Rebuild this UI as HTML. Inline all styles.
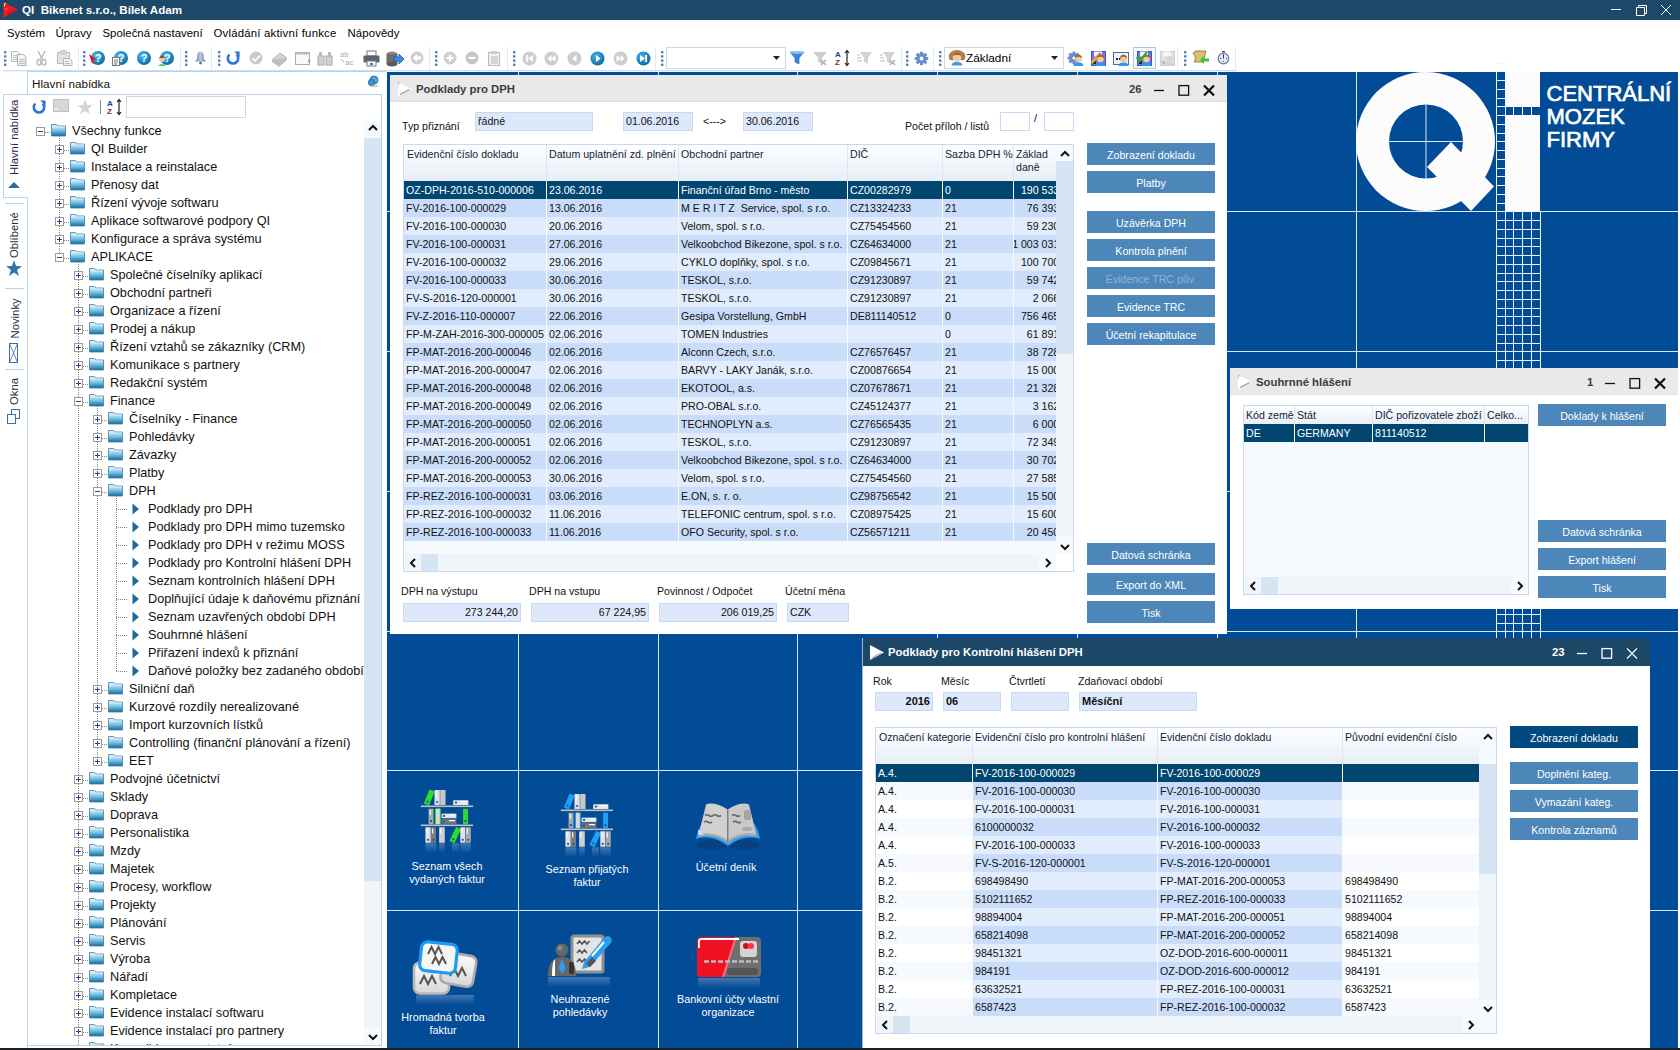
<!DOCTYPE html><html><head><meta charset="utf-8"><style>
html,body{margin:0;padding:0;}
body{width:1680px;height:1050px;overflow:hidden;position:relative;background:#fff;font-family:"Liberation Sans", sans-serif;font-size:11px;color:#111;}
div{box-sizing:border-box;}
svg{position:absolute;overflow:visible;}
</style></head><body>

<div style="position:absolute;left:0px;top:0px;width:1680px;height:20px;background:#1e4868"></div>
<svg style="left:0;top:0" width="20" height="20"><path d="M3.5 2 L18 9.7 L3.5 17.8 Z" fill="#ee1b22"/><path d="M7.5 14 L15 10" stroke="#a81515" stroke-width="1.3"/><path d="M4.5 3.5 v3 M4.5 3.5 h1.5 M4.8 9 h0.8 M6.5 9 h0.8" stroke="#fff" stroke-width="0.8"/></svg>
<div style="position:absolute;left:22px;top:0px;height:20px;line-height:20px;white-space:nowrap;color:#fff;font-weight:bold;font-size:11.6px;white-space:pre;">QI  Bikenet s.r.o., Bílek Adam</div>
<svg style="left:1600px;top:0" width="80" height="20" fill="none" stroke="#fff" stroke-width="1"><path d="M11 9.5 H21"/><path d="M36.5 7.5 h8 v8 h-8 z"/><path d="M38.5 7.5 v-2 h8 v8 h-2"/><path d="M61 5 L71 15 M71 5 L61 15"/></svg>
<div style="position:absolute;left:7px;top:24px;height:18px;line-height:18px;white-space:nowrap;font-size:11.4px;color:#000;letter-spacing:0px;">Systém</div>
<div style="position:absolute;left:55.5px;top:24px;height:18px;line-height:18px;white-space:nowrap;font-size:11.4px;color:#000;letter-spacing:0px;">Úpravy</div>
<div style="position:absolute;left:102.5px;top:24px;height:18px;line-height:18px;white-space:nowrap;font-size:11.4px;color:#000;letter-spacing:0px;">Společná nastavení</div>
<div style="position:absolute;left:213.5px;top:24px;height:18px;line-height:18px;white-space:nowrap;font-size:11.4px;color:#000;letter-spacing:0.2px;">Ovládání aktivní funkce</div>
<div style="position:absolute;left:347.5px;top:24px;height:18px;line-height:18px;white-space:nowrap;font-size:11.4px;color:#000;letter-spacing:0.1px;">Nápovědy</div>
<div style="position:absolute;left:78px;top:47px;width:1px;height:23px;background:#e3ebf5;"></div>
<div style="position:absolute;left:180px;top:47px;width:1px;height:23px;background:#e3ebf5;"></div>
<div style="position:absolute;left:211px;top:47px;width:1px;height:23px;background:#e3ebf5;"></div>
<div style="position:absolute;left:429px;top:47px;width:1px;height:23px;background:#e3ebf5;"></div>
<div style="position:absolute;left:507px;top:47px;width:1px;height:23px;background:#e3ebf5;"></div>
<div style="position:absolute;left:655px;top:47px;width:1px;height:23px;background:#e3ebf5;"></div>
<div style="position:absolute;left:901px;top:47px;width:1px;height:23px;background:#e3ebf5;"></div>
<div style="position:absolute;left:933px;top:47px;width:1px;height:23px;background:#e3ebf5;"></div>
<div style="position:absolute;left:1177px;top:47px;width:1px;height:23px;background:#e3ebf5;"></div>
<div style="position:absolute;left:1235px;top:47px;width:1px;height:23px;background:#e3ebf5;"></div>
<div style="position:absolute;left:3px;top:70px;width:1233px;height:1px;background:#cddcf0;"></div>
<div style="position:absolute;left:3px;top:71px;width:1233px;height:1px;background:#edf3fa;"></div>
<svg style="left:4px;top:51px;" width="4" height="18"><rect x="0" y="0.0" width="2.4" height="2.4" fill="#5b7cb8"/><rect x="0" y="4.2" width="2.4" height="2.4" fill="#5b7cb8"/><rect x="0" y="8.4" width="2.4" height="2.4" fill="#5b7cb8"/><rect x="0" y="12.6" width="2.4" height="2.4" fill="#5b7cb8"/></svg>
<svg style="left:83px;top:51px;" width="4" height="18"><rect x="0" y="0.0" width="2.4" height="2.4" fill="#5b7cb8"/><rect x="0" y="4.2" width="2.4" height="2.4" fill="#5b7cb8"/><rect x="0" y="8.4" width="2.4" height="2.4" fill="#5b7cb8"/><rect x="0" y="12.6" width="2.4" height="2.4" fill="#5b7cb8"/></svg>
<svg style="left:185px;top:51px;" width="4" height="18"><rect x="0" y="0.0" width="2.4" height="2.4" fill="#5b7cb8"/><rect x="0" y="4.2" width="2.4" height="2.4" fill="#5b7cb8"/><rect x="0" y="8.4" width="2.4" height="2.4" fill="#5b7cb8"/><rect x="0" y="12.6" width="2.4" height="2.4" fill="#5b7cb8"/></svg>
<svg style="left:218px;top:51px;" width="4" height="18"><rect x="0" y="0.0" width="2.4" height="2.4" fill="#5b7cb8"/><rect x="0" y="4.2" width="2.4" height="2.4" fill="#5b7cb8"/><rect x="0" y="8.4" width="2.4" height="2.4" fill="#5b7cb8"/><rect x="0" y="12.6" width="2.4" height="2.4" fill="#5b7cb8"/></svg>
<svg style="left:435px;top:51px;" width="4" height="18"><rect x="0" y="0.0" width="2.4" height="2.4" fill="#5b7cb8"/><rect x="0" y="4.2" width="2.4" height="2.4" fill="#5b7cb8"/><rect x="0" y="8.4" width="2.4" height="2.4" fill="#5b7cb8"/><rect x="0" y="12.6" width="2.4" height="2.4" fill="#5b7cb8"/></svg>
<svg style="left:513px;top:51px;" width="4" height="18"><rect x="0" y="0.0" width="2.4" height="2.4" fill="#5b7cb8"/><rect x="0" y="4.2" width="2.4" height="2.4" fill="#5b7cb8"/><rect x="0" y="8.4" width="2.4" height="2.4" fill="#5b7cb8"/><rect x="0" y="12.6" width="2.4" height="2.4" fill="#5b7cb8"/></svg>
<svg style="left:661px;top:51px;" width="4" height="18"><rect x="0" y="0.0" width="2.4" height="2.4" fill="#5b7cb8"/><rect x="0" y="4.2" width="2.4" height="2.4" fill="#5b7cb8"/><rect x="0" y="8.4" width="2.4" height="2.4" fill="#5b7cb8"/><rect x="0" y="12.6" width="2.4" height="2.4" fill="#5b7cb8"/></svg>
<svg style="left:906px;top:51px;" width="4" height="18"><rect x="0" y="0.0" width="2.4" height="2.4" fill="#5b7cb8"/><rect x="0" y="4.2" width="2.4" height="2.4" fill="#5b7cb8"/><rect x="0" y="8.4" width="2.4" height="2.4" fill="#5b7cb8"/><rect x="0" y="12.6" width="2.4" height="2.4" fill="#5b7cb8"/></svg>
<svg style="left:939px;top:51px;" width="4" height="18"><rect x="0" y="0.0" width="2.4" height="2.4" fill="#5b7cb8"/><rect x="0" y="4.2" width="2.4" height="2.4" fill="#5b7cb8"/><rect x="0" y="8.4" width="2.4" height="2.4" fill="#5b7cb8"/><rect x="0" y="12.6" width="2.4" height="2.4" fill="#5b7cb8"/></svg>
<svg style="left:1184px;top:51px;" width="4" height="18"><rect x="0" y="0.0" width="2.4" height="2.4" fill="#5b7cb8"/><rect x="0" y="4.2" width="2.4" height="2.4" fill="#5b7cb8"/><rect x="0" y="8.4" width="2.4" height="2.4" fill="#5b7cb8"/><rect x="0" y="12.6" width="2.4" height="2.4" fill="#5b7cb8"/></svg>
<svg style="left:10px;top:50px;" width="18" height="16"><path d="M1.5 1.5 h6 l2.5 2.5 v7.5 h-8.5z" fill="#f6f6f6" stroke="#b9b9b9"/><path d="M3 5.5h5M3 7.5h5M3 9.5h4" stroke="#c2c2c2"/><path d="M7.5 4.5 h6 l2.5 2.5 v8.5 h-8.5z" fill="#f6f6f6" stroke="#b0b0b0"/><path d="M9 9.5h6M9 11.5h6M9 13.5h6" stroke="#bdbdbd"/></svg>
<svg style="left:36px;top:50px;" width="11" height="16"><path d="M2 1 L6.5 9.5 M9 1 L4.5 9.5" stroke="#b5b5b5" stroke-width="1.3"/><ellipse cx="3" cy="12.3" rx="2" ry="2.8" fill="none" stroke="#b9b9b9" stroke-width="1.4"/><ellipse cx="8" cy="12.3" rx="2" ry="2.8" fill="none" stroke="#b9b9b9" stroke-width="1.4"/></svg>
<svg style="left:56px;top:50px;" width="18" height="16"><rect x="1.5" y="2.5" width="12" height="11" fill="#e4e4e4" stroke="#bdbdbd"/><rect x="4.5" y="0.5" width="6" height="3.5" rx="1" fill="#d8d8d8" stroke="#bbb" stroke-width="0.8"/><path d="M7.5 8.5 h6 l2.5 2.5 v4.5 h-8.5z" fill="#f0f0f0" stroke="#b5b5b5"/><path d="M9 11.5h4M9 13.5h5" stroke="#bdbdbd"/></svg>
<svg style="left:89px;top:50px;" width="18" height="17"><defs><radialGradient id="hg" cx="40%" cy="35%" r="65%"><stop offset="0" stop-color="#4fc2f0"/><stop offset="1" stop-color="#0a6aa8"/></radialGradient></defs><circle cx="9" cy="8" r="7" fill="url(#hg)"/><text x="9" y="12.2" font-size="11" font-weight="bold" fill="#fff" text-anchor="middle" font-family="Liberation Sans">?</text><path d="M0 4 L7 9 L4 10 L6 14 L3 13 Z" fill="#e01919"/></svg>
<svg style="left:112px;top:50px;" width="18" height="17"><defs><radialGradient id="hg" cx="40%" cy="35%" r="65%"><stop offset="0" stop-color="#4fc2f0"/><stop offset="1" stop-color="#0a6aa8"/></radialGradient></defs><circle cx="9" cy="8" r="7" fill="url(#hg)"/><text x="9" y="12.2" font-size="11" font-weight="bold" fill="#fff" text-anchor="middle" font-family="Liberation Sans">?</text><rect x="0.5" y="7.5" width="7" height="8" fill="#fff" stroke="#777"/><path d="M2 10h4M2 12h4M2 14h3" stroke="#777"/></svg>
<svg style="left:135px;top:50px;" width="18" height="17"><defs><radialGradient id="hg" cx="40%" cy="35%" r="65%"><stop offset="0" stop-color="#4fc2f0"/><stop offset="1" stop-color="#0a6aa8"/></radialGradient></defs><circle cx="9" cy="8" r="7" fill="url(#hg)"/><text x="9" y="12.2" font-size="11" font-weight="bold" fill="#fff" text-anchor="middle" font-family="Liberation Sans">?</text></svg>
<svg style="left:158px;top:50px;" width="18" height="17"><defs><radialGradient id="hg" cx="40%" cy="35%" r="65%"><stop offset="0" stop-color="#4fc2f0"/><stop offset="1" stop-color="#0a6aa8"/></radialGradient></defs><circle cx="9" cy="8" r="7" fill="url(#hg)"/><text x="9" y="12.2" font-size="11" font-weight="bold" fill="#fff" text-anchor="middle" font-family="Liberation Sans">?</text><circle cx="4" cy="9" r="3" fill="#f2c8a0"/><path d="M1 8 q3 -5 6 0" fill="#7a4a20"/><path d="M0 16 q4 -4 8 0z" fill="#47c94a"/></svg>
<svg style="left:194px;top:51px;" width="13" height="14"><defs><linearGradient id="bellg" x1="0" x2="1"><stop offset="0" stop-color="#5f7fb0"/><stop offset="0.5" stop-color="#b8c8e0"/><stop offset="1" stop-color="#6080b0"/></linearGradient></defs><path d="M6.5 0.5 C3.5 0.5 3 4 3 8 L1 10.5 H12 L10 8 C10 4 9.5 0.5 6.5 0.5Z" fill="url(#bellg)"/><circle cx="6.5" cy="12" r="1.4" fill="#4f6f98"/></svg>
<svg style="left:225px;top:50px;" width="16" height="16"><path d="M4.4 4.6 A5.2 5.2 0 1 0 11.6 4.6" fill="none" stroke="#2f74dc" stroke-width="2.6"/><path d="M9.2 1.6 L14.6 1.6 L14.6 7Z" fill="#2f74dc"/></svg>
<svg style="left:249px;top:51px;" width="15" height="15"><circle cx="7" cy="7" r="6.5" fill="#c9c9c9"/><path d="M3.5 7 L6 10 L11 4.5" fill="none" stroke="#fff" stroke-width="1.8"/></svg>
<svg style="left:271px;top:51px;" width="17" height="15"><path d="M1 9 L9 2 L16 7 L8 14 Z" fill="#d2d2d2" stroke="#b5b5b5"/><path d="M1 9 L1 11 L8 16 L16 9 L16 7" fill="#bdbdbd"/></svg>
<svg style="left:295px;top:51px;" width="16" height="15"><rect x="0.5" y="1.5" width="14" height="12" fill="#fafafa" stroke="#aaa"/><rect x="0.5" y="1.5" width="14" height="2" fill="#bbb"/><path d="M13 8 L16 10 L13 12Z" fill="#aaa"/></svg>
<svg style="left:317px;top:51px;" width="16" height="15"><rect x="1" y="5" width="6" height="9" fill="#d0d0d0" stroke="#aaa"/><rect x="9" y="5" width="6" height="9" fill="#d0d0d0" stroke="#aaa"/><rect x="2" y="1" width="3" height="5" fill="#bbb"/><rect x="11" y="1" width="3" height="5" fill="#bbb"/></svg>
<svg style="left:340px;top:50px;" width="16" height="17"><text x="0" y="7" font-size="7.5" fill="#a8a8a8" font-family="Liberation Sans">ab</text><text x="5" y="15" font-size="8" fill="#a8a8a8" font-family="Liberation Sans">ac</text><path d="M1 9 L4 12" stroke="#aaa"/></svg>
<svg style="left:363px;top:50px;" width="17" height="17"><rect x="4" y="1" width="9" height="5" fill="#fff" stroke="#777"/><rect x="0.5" y="5.5" width="16" height="7" rx="1" fill="#5a6470"/><rect x="4" y="11" width="9" height="5" fill="#fff" stroke="#777"/><rect x="7" y="13" width="3" height="2" fill="#2a7ad4"/></svg>
<svg style="left:386px;top:50px;" width="18" height="17"><ellipse cx="6" cy="4" rx="5.5" ry="2.5" fill="#888"/><rect x="0.5" y="4" width="11" height="10" fill="#6d6d6d"/><ellipse cx="6" cy="14" rx="5.5" ry="2.5" fill="#5a5a5a"/><path d="M8 7 h5 v-3 l5 5 l-5 5 v-3 h-5z" fill="#3d8be8" stroke="#1d5bb8" stroke-width="0.8"/></svg>
<svg style="left:410px;top:51px;" width="15" height="15"><circle cx="7" cy="7" r="6.5" fill="#cfcfcf"/><path d="M3 7 L7 3 V5.5 H11 V8.5 H7 V11Z" fill="#fff"/></svg>
<svg style="left:443px;top:51px;" width="15" height="15"><circle cx="7" cy="7" r="6.5" fill="#cfcfcf"/><path d="M3.5 7 H10.5 M7 3.5 V10.5" stroke="#fff" stroke-width="2.2"/></svg>
<svg style="left:465px;top:51px;" width="15" height="15"><circle cx="7" cy="7" r="6.5" fill="#c5c5c5"/><path d="M3.5 7 H10.5" stroke="#fff" stroke-width="2.2"/></svg>
<svg style="left:487px;top:50px;" width="15" height="16"><rect x="1.5" y="2.5" width="11" height="13" fill="#f0f0f0" stroke="#bbb"/><rect x="4" y="1" width="6" height="3" fill="#ccc"/><path d="M4 7h7M4 9h7M4 11h7M4 13h7" stroke="#bbb"/></svg>
<svg style="left:522px;top:51px;" width="16" height="16"><circle cx="7.5" cy="7.5" r="7" fill="#cdcdcd"/><rect x="4" y="4" width="1.8" height="7" fill="#fff"/><path d="M11 4 L6 7.5 L11 11Z" fill="#fff"/></svg>
<svg style="left:544px;top:51px;" width="16" height="16"><circle cx="7.5" cy="7.5" r="7" fill="#cdcdcd"/><path d="M7.5 4 L3.5 7.5 L7.5 11Z M11.5 4 L7.5 7.5 L11.5 11Z" fill="#fff"/></svg>
<svg style="left:567px;top:51px;" width="16" height="16"><circle cx="7.5" cy="7.5" r="7" fill="#cdcdcd"/><path d="M9.5 4 L5 7.5 L9.5 11Z" fill="#fff"/></svg>
<svg style="left:590px;top:51px;" width="16" height="16"><defs><radialGradient id="ng" cx="40%" cy="35%" r="70%"><stop offset="0" stop-color="#3fb7ea"/><stop offset="1" stop-color="#0a65a3"/></radialGradient></defs><circle cx="7.5" cy="7.5" r="7" fill="url(#ng)"/><path d="M6 4 L10.5 7.5 L6 11Z" fill="#fff"/></svg>
<svg style="left:613px;top:51px;" width="16" height="16"><circle cx="7.5" cy="7.5" r="7" fill="#cdcdcd"/><path d="M3.5 4 L7.5 7.5 L3.5 11Z M7.5 4 L11.5 7.5 L7.5 11Z" fill="#fff"/></svg>
<svg style="left:636px;top:51px;" width="16" height="16"><defs><radialGradient id="ng" cx="40%" cy="35%" r="70%"><stop offset="0" stop-color="#3fb7ea"/><stop offset="1" stop-color="#0a65a3"/></radialGradient></defs><circle cx="7.5" cy="7.5" r="7" fill="url(#ng)"/><path d="M4 4 L9 7.5 L4 11Z" fill="#fff"/><rect x="9.2" y="4" width="1.8" height="7" fill="#fff"/></svg>
<div style="position:absolute;left:666px;top:47px;width:120px;height:22px;border:1px solid #c9d9ee;background:#fff;"></div>
<svg style="left:773px;top:56px;" width="8" height="5"><path d="M0 0 H7 L3.5 4Z" fill="#222"/></svg>
<svg style="left:789px;top:50px;" width="16" height="16"><path d="M1 2 H15 L10 8 V14 L6 12 V8Z" fill="#3d86e0" stroke="#1e5cb0" stroke-width="0.6"/><ellipse cx="8" cy="2.5" rx="7" ry="1.5" fill="#8cc0f5"/></svg>
<svg style="left:812px;top:50px;" width="16" height="16"><path d="M1 2 H15 L10 8 V14 L6 12 V8Z" fill="#cfcfcf"/><path d="M9 10 L14 15 M14 10 L9 15" stroke="#aaa" stroke-width="1.2"/></svg>
<svg style="left:835px;top:49px;" width="16" height="18"><text x="0" y="8" font-size="8" font-weight="bold" fill="#1f3f9a" font-family="Liberation Sans">A</text><text x="0" y="16" font-size="8" font-weight="bold" fill="#8a1f1f" font-family="Liberation Sans">Z</text><path d="M12 2 V16 M10 4 L12 1.5 L14 4 M10 14 L12 16.5 L14 14" stroke="#222" stroke-width="1.2" fill="none"/></svg>
<svg style="left:857px;top:50px;" width="16" height="16"><path d="M3 2 H15 L11 8 V14 L7 12 V8Z" fill="#d3d3d3"/><path d="M0 5h3M0 8h4M0 11h5" stroke="#bbb"/></svg>
<svg style="left:880px;top:50px;" width="17" height="16"><path d="M3 2 H15 L11 8 V14 L7 12 V8Z" fill="#d3d3d3"/><path d="M0 5h3M0 8h4M0 11h5" stroke="#bbb"/><path d="M10 10 L15 15 M15 10 L10 15" stroke="#aaa" stroke-width="1.2"/></svg>
<svg style="left:914px;top:51px;" width="15" height="15"><g fill="#6a8ccc"><rect x="5.9" y="0.7" width="3.2" height="13.6" rx="0.8" transform="rotate(0 7.5 7.5)"/><rect x="5.9" y="0.7" width="3.2" height="13.6" rx="0.8" transform="rotate(45 7.5 7.5)"/><rect x="5.9" y="0.7" width="3.2" height="13.6" rx="0.8" transform="rotate(90 7.5 7.5)"/><rect x="5.9" y="0.7" width="3.2" height="13.6" rx="0.8" transform="rotate(135 7.5 7.5)"/><circle cx="7.5" cy="7.5" r="5"/></g><circle cx="7.5" cy="7.5" r="1.9" fill="#fff"/></svg>
<div style="position:absolute;left:944px;top:47px;width:120px;height:22px;border:1px solid #c9d9ee;background:#fff;"></div>
<svg style="left:948px;top:50px;" width="18" height="16"><path d="M1 9 Q0 4 3 2 Q5.5 0 9 0 Q12.5 0 15 2 Q18 4 17 9 Q15 11 13 10 L5 10 Q3 11 1 9Z" fill="#b07c4a"/><circle cx="9" cy="7.5" r="4.3" fill="#f3c9a0"/><path d="M4.8 6 Q6 2.5 9 3 Q12 2.5 13.2 6 Q11 4.5 9 5 Q7 4.5 4.8 6Z" fill="#9a6636"/><path d="M3.5 15.5 Q4 11.5 9 12 Q14 11.5 14.5 15.5Z" fill="#3b9ee8"/></svg>
<div style="position:absolute;left:966px;top:47px;height:22px;line-height:22px;white-space:nowrap;font-size:11.8px;color:#000;">Základní</div>
<svg style="left:1051px;top:56px;" width="8" height="5"><path d="M0 0 H7 L3.5 4Z" fill="#222"/></svg>
<svg style="left:1068px;top:50px;" width="17" height="17"><g fill="#6a8ccc"><rect x="4.4" y="1.6" width="3.2" height="12.8" rx="0.8" transform="rotate(0 6 8)"/><rect x="4.4" y="1.6" width="3.2" height="12.8" rx="0.8" transform="rotate(45 6 8)"/><rect x="4.4" y="1.6" width="3.2" height="12.8" rx="0.8" transform="rotate(90 6 8)"/><rect x="4.4" y="1.6" width="3.2" height="12.8" rx="0.8" transform="rotate(135 6 8)"/><circle cx="6" cy="8" r="4.6"/></g><circle cx="6" cy="8" r="1.6" fill="#fff"/><path d="M5.5 16 Q6 12 10.5 12.5 Q15 12 15.5 16Z" fill="#2f9be8"/><circle cx="10.5" cy="9" r="3.3" fill="#f3c9a0"/><path d="M7 8.5 Q7 4.8 10.5 4.8 Q14 4.8 14 8.5 Q12.5 6.5 10.5 6.8 Q8.5 6.5 7 8.5Z" fill="#a0622a"/></svg>
<svg style="left:1090px;top:50px;" width="17" height="17"><rect x="1.5" y="1.5" width="14" height="14" fill="#7176dc" stroke="#4b50b5"/><rect x="4" y="1.5" width="8" height="5" fill="#f4f4ff"/><rect x="3" y="11" width="3" height="3" fill="#222"/><path d="M1.5 13 L10 4" stroke="#d8a838" stroke-width="3"/><path d="M9 3 L11 5" stroke="#e07060" stroke-width="2"/><path d="M5.5 16 Q6 12 10.5 12.5 Q15 12 15.5 16Z" fill="#2f9be8"/><circle cx="10.5" cy="9" r="3.3" fill="#f3c9a0"/><path d="M7 8.5 Q7 4.8 10.5 4.8 Q14 4.8 14 8.5 Q12.5 6.5 10.5 6.8 Q8.5 6.5 7 8.5Z" fill="#a0622a"/></svg>
<svg style="left:1113px;top:50px;" width="17" height="17"><rect x="0.5" y="2.5" width="15" height="12" fill="#eef4fb" stroke="#5a6a8a"/><rect x="3" y="8" width="2" height="2" fill="#222"/><rect x="6" y="8" width="2" height="2" fill="#222"/><path d="M5.5 16 Q6 12 10.5 12.5 Q15 12 15.5 16Z" fill="#2f9be8"/><circle cx="10.5" cy="9" r="3.3" fill="#f3c9a0"/><path d="M7 8.5 Q7 4.8 10.5 4.8 Q14 4.8 14 8.5 Q12.5 6.5 10.5 6.8 Q8.5 6.5 7 8.5Z" fill="#a0622a"/></svg>
<div style="position:absolute;left:1133px;top:47px;width:23px;height:22px;border:1px solid #a9c8ea;background:#f4f8fd;"></div>
<svg style="left:1136px;top:50px;" width="17" height="17"><rect x="1.5" y="1.5" width="14" height="14" fill="#7176dc" stroke="#4b50b5"/><rect x="4" y="1.5" width="8" height="5" fill="#f4f4ff"/><rect x="3" y="11" width="3" height="3" fill="#222"/><path d="M0.5 7 L4 11 L11 2" stroke="#20b820" stroke-width="2.2" fill="none"/><path d="M5.5 16 Q6 12 10.5 12.5 Q15 12 15.5 16Z" fill="#2f9be8"/><circle cx="10.5" cy="9" r="3.3" fill="#f3c9a0"/><path d="M7 8.5 Q7 4.8 10.5 4.8 Q14 4.8 14 8.5 Q12.5 6.5 10.5 6.8 Q8.5 6.5 7 8.5Z" fill="#a0622a"/></svg>
<svg style="left:1159px;top:50px;" width="17" height="17"><rect x="1.5" y="1.5" width="14" height="14" fill="#e2e2e2" stroke="#cfcfcf"/><rect x="4" y="1.5" width="8" height="5" fill="#f4f4ff"/><rect x="3" y="11" width="3" height="3" fill="#bbb"/><path d="M5.5 16 Q6 12 10.5 12.5 Q15 12 15.5 16Z" fill="#d0d0d0"/><circle cx="10.5" cy="9" r="3.3" fill="#d8d8d8"/></svg>
<svg style="left:1192px;top:50px;" width="18" height="17"><path d="M1 3 Q3 0 8 1 L14 1 L11 12 L2 12 Q5 8 1 3Z" fill="#d8c070" stroke="#8a7030" stroke-width="0.8"/><path d="M8 10 L12 6 V8.5 H17 V11.5 H12 V14Z" fill="#3cc43c"/></svg>
<svg style="left:1217px;top:50px;" width="14" height="16"><rect x="5" y="1" width="3" height="1.5" fill="#555"/><circle cx="6.5" cy="8.5" r="5.3" fill="#dfe8f6" stroke="#6c7fa8" stroke-width="1.2"/><path d="M6.5 8.5 V4.5" stroke="#335" stroke-width="1"/><circle cx="6.5" cy="5" r="0.6" fill="#335"/><circle cx="3.5" cy="8.5" r="0.6" fill="#335"/><circle cx="9.5" cy="8.5" r="0.6" fill="#335"/><circle cx="6.5" cy="11.5" r="0.6" fill="#335"/></svg>
<div style="position:absolute;left:27px;top:94px;width:1px;height:954px;background:#b9d1ec"></div>
<div style="position:absolute;left:3px;top:94px;width:25px;height:104px;background:#fff;border:1px solid #b9d1ec;border-right:none;"></div>
<div style="position:absolute;left:27px;top:95px;width:1px;height:102px;background:#fff"></div>
<div style="position:absolute;left:27px;top:71px;width:1px;height:24px;background:#b9d1ec"></div>
<div style="position:absolute;left:27px;top:71px;width:359px;height:1px;background:#b9d1ec"></div>
<div style="position:absolute;left:5px;top:203px;width:19px;height:1px;background:#b9d1ec"></div>
<div style="position:absolute;left:5px;top:288px;width:19px;height:1px;background:#b9d1ec"></div>
<div style="position:absolute;left:5px;top:369px;width:19px;height:1px;background:#b9d1ec"></div>
<div style="position:absolute;left:-22.0px;top:131.0px;width:72px;height:16px;line-height:16px;text-align:center;transform:rotate(-90deg);white-space:nowrap;font-size:11.3px;color:#1f2a44;">Hlavní nabídka</div>
<svg style="left:7px;top:180px;" width="14" height="9"><path d="M1 8 L7 2 L13 8Z" fill="#2b6c9c"/></svg>
<div style="position:absolute;left:-8.0px;top:228.0px;width:44px;height:16px;line-height:16px;text-align:center;transform:rotate(-90deg);white-space:nowrap;font-size:11.3px;color:#1f2a44;">Oblíbené</div>
<svg style="left:6px;top:260px;" width="16" height="17"><path d="M8 0 L10 6 L16 6.2 L11 10 L13 16 L8 12.4 L3 16 L5 10 L0 6.2 L6 6Z" fill="#2f74a8"/></svg>
<div style="position:absolute;left:-5.5px;top:310.5px;width:39px;height:16px;line-height:16px;text-align:center;transform:rotate(-90deg);white-space:nowrap;font-size:11.3px;color:#1f2a44;">Novinky</div>
<svg style="left:9px;top:343px;" width="10" height="21"><rect x="0.5" y="0.5" width="8" height="19" fill="none" stroke="#3a6ea5"/><path d="M0.5 0.5 L4.5 10 L0.5 19.5 M8.5 0.5 L4.5 10 L8.5 19.5" stroke="#3a6ea5" stroke-width="0.8" fill="none"/></svg>
<div style="position:absolute;left:1.0px;top:384.0px;width:26px;height:16px;line-height:16px;text-align:center;transform:rotate(-90deg);white-space:nowrap;font-size:11.3px;color:#1f2a44;">Okna</div>
<svg style="left:7px;top:409px;" width="13" height="15"><rect x="4.5" y="0.5" width="8" height="9" fill="#fff" stroke="#3a6ea5"/><rect x="0.5" y="5.5" width="8" height="9" fill="#fff" stroke="#3a6ea5"/></svg>
<div style="position:absolute;left:32px;top:74px;height:20px;line-height:20px;white-space:nowrap;font-size:11.7px;color:#111;">Hlavní nabídka</div>
<svg style="left:366px;top:75px;" width="14" height="14"><circle cx="8" cy="5" r="4" fill="#4aa8e0" stroke="#1b6aa8" stroke-width="0.8"/><circle cx="5.5" cy="7.5" r="3.2" fill="#3a93d0" stroke="#1b6aa8" stroke-width="0.8"/><ellipse cx="8" cy="11" rx="4" ry="1.3" fill="#999" opacity="0.5"/></svg>
<div style="position:absolute;left:27px;top:94px;width:355px;height:952px;border:1px solid #b9d1ec;border-left:none;"></div>
<svg style="left:31px;top:99px;" width="16" height="16"><path d="M4.4 4.6 A5.2 5.2 0 1 0 11.6 4.6" fill="none" stroke="#2f74dc" stroke-width="2.6"/><path d="M9.2 1.6 L14.6 1.6 L14.6 7Z" fill="#2f74dc"/></svg>
<svg style="left:53px;top:99px;" width="17" height="14"><rect x="0.5" y="0.5" width="15" height="12" fill="#d6d6d6" stroke="#c0c0c0"/><rect x="2" y="9" width="3" height="2" fill="#eee"/></svg>
<svg style="left:77px;top:99px;" width="16" height="16"><path d="M8 0.5 L10 6 L15.5 6.2 L11.2 9.8 L12.8 15.3 L8 12 L3.2 15.3 L4.8 9.8 L0.5 6.2 L6 6Z" fill="#d4d4d4"/></svg>
<div style="position:absolute;left:100px;top:100px;width:1px;height:14px;background:#6f8fb5"></div>
<svg style="left:107px;top:98px;" width="16" height="18"><text x="0" y="8" font-size="8" font-weight="bold" fill="#1f3f9a" font-family="Liberation Sans">A</text><text x="0" y="16" font-size="8" font-weight="bold" fill="#8a1f1f" font-family="Liberation Sans">Z</text><path d="M12 2 V16 M10 4 L12 1.5 L14 4 M10 14 L12 16.5 L14 14" stroke="#222" stroke-width="1.2" fill="none"/></svg>
<div style="position:absolute;left:126px;top:96px;width:120px;height:22px;border:1px solid #c9daf0;background:#fff;"></div>
<div style="position:absolute;left:28px;top:121px;width:336px;height:924px;overflow:hidden;">
<svg style="left:31px;top:15px" width="1" height="120"><path d="M0.5 0V120" stroke="#888" stroke-dasharray="1 1"/></svg>
<svg style="left:50px;top:141px" width="1" height="788"><path d="M0.5 0V788" stroke="#888" stroke-dasharray="1 1"/></svg>
<svg style="left:69px;top:285px" width="1" height="354"><path d="M0.5 0V354" stroke="#888" stroke-dasharray="1 1"/></svg>
<svg style="left:88px;top:375px" width="1" height="175"><path d="M0.5 0V175" stroke="#888" stroke-dasharray="1 1"/></svg>
<svg style="left:8px;top:6px" width="10" height="10"><rect x="0.5" y="0.5" width="8" height="8" fill="#fff" stroke="#9a9a9a"/><path d="M2 4.5h5" stroke="#2a3f8a"/></svg>
<svg style="left:17px;top:11px" width="6" height="1"><path d="M0 0.5h6" stroke="#888" stroke-dasharray="1 1"/></svg>
<svg style="left:23px;top:3px" width="16" height="14"><defs><linearGradient id="fg" x1="0" y1="0" x2="0" y2="1"><stop offset="0" stop-color="#e9f6fc"/><stop offset="0.5" stop-color="#7fc4e6"/><stop offset="1" stop-color="#0f6d9c"/></linearGradient></defs><path d="M0.5 0.5 h5 l1.5 1.5 h7.5 v10 h-14z" fill="url(#fg)" stroke="#3f7fa5" stroke-width="0.8"/><path d="M1 3 h13" stroke="#d8eef8" /></svg>
<div style="position:absolute;left:44px;top:1px;height:18px;line-height:18px;white-space:nowrap;font-size:12.7px;color:#111;">Všechny funkce</div>
<svg style="left:27px;top:24px" width="10" height="10"><rect x="0.5" y="0.5" width="8" height="8" fill="#fff" stroke="#9a9a9a"/><path d="M2 4.5h5M4.5 2v5" stroke="#2a3f8a"/></svg>
<svg style="left:36px;top:29px" width="6" height="1"><path d="M0 0.5h6" stroke="#888" stroke-dasharray="1 1"/></svg>
<svg style="left:42px;top:21px" width="16" height="14"><defs><linearGradient id="fg" x1="0" y1="0" x2="0" y2="1"><stop offset="0" stop-color="#e9f6fc"/><stop offset="0.5" stop-color="#7fc4e6"/><stop offset="1" stop-color="#0f6d9c"/></linearGradient></defs><path d="M0.5 0.5 h5 l1.5 1.5 h7.5 v10 h-14z" fill="url(#fg)" stroke="#3f7fa5" stroke-width="0.8"/><path d="M1 3 h13" stroke="#d8eef8" /></svg>
<div style="position:absolute;left:63px;top:19px;height:18px;line-height:18px;white-space:nowrap;font-size:12.7px;color:#111;">QI Builder</div>
<svg style="left:27px;top:42px" width="10" height="10"><rect x="0.5" y="0.5" width="8" height="8" fill="#fff" stroke="#9a9a9a"/><path d="M2 4.5h5M4.5 2v5" stroke="#2a3f8a"/></svg>
<svg style="left:36px;top:47px" width="6" height="1"><path d="M0 0.5h6" stroke="#888" stroke-dasharray="1 1"/></svg>
<svg style="left:42px;top:39px" width="16" height="14"><defs><linearGradient id="fg" x1="0" y1="0" x2="0" y2="1"><stop offset="0" stop-color="#e9f6fc"/><stop offset="0.5" stop-color="#7fc4e6"/><stop offset="1" stop-color="#0f6d9c"/></linearGradient></defs><path d="M0.5 0.5 h5 l1.5 1.5 h7.5 v10 h-14z" fill="url(#fg)" stroke="#3f7fa5" stroke-width="0.8"/><path d="M1 3 h13" stroke="#d8eef8" /></svg>
<div style="position:absolute;left:63px;top:37px;height:18px;line-height:18px;white-space:nowrap;font-size:12.7px;color:#111;">Instalace a reinstalace</div>
<svg style="left:27px;top:60px" width="10" height="10"><rect x="0.5" y="0.5" width="8" height="8" fill="#fff" stroke="#9a9a9a"/><path d="M2 4.5h5M4.5 2v5" stroke="#2a3f8a"/></svg>
<svg style="left:36px;top:65px" width="6" height="1"><path d="M0 0.5h6" stroke="#888" stroke-dasharray="1 1"/></svg>
<svg style="left:42px;top:57px" width="16" height="14"><defs><linearGradient id="fg" x1="0" y1="0" x2="0" y2="1"><stop offset="0" stop-color="#e9f6fc"/><stop offset="0.5" stop-color="#7fc4e6"/><stop offset="1" stop-color="#0f6d9c"/></linearGradient></defs><path d="M0.5 0.5 h5 l1.5 1.5 h7.5 v10 h-14z" fill="url(#fg)" stroke="#3f7fa5" stroke-width="0.8"/><path d="M1 3 h13" stroke="#d8eef8" /></svg>
<div style="position:absolute;left:63px;top:55px;height:18px;line-height:18px;white-space:nowrap;font-size:12.7px;color:#111;">Přenosy dat</div>
<svg style="left:27px;top:78px" width="10" height="10"><rect x="0.5" y="0.5" width="8" height="8" fill="#fff" stroke="#9a9a9a"/><path d="M2 4.5h5M4.5 2v5" stroke="#2a3f8a"/></svg>
<svg style="left:36px;top:83px" width="6" height="1"><path d="M0 0.5h6" stroke="#888" stroke-dasharray="1 1"/></svg>
<svg style="left:42px;top:75px" width="16" height="14"><defs><linearGradient id="fg" x1="0" y1="0" x2="0" y2="1"><stop offset="0" stop-color="#e9f6fc"/><stop offset="0.5" stop-color="#7fc4e6"/><stop offset="1" stop-color="#0f6d9c"/></linearGradient></defs><path d="M0.5 0.5 h5 l1.5 1.5 h7.5 v10 h-14z" fill="url(#fg)" stroke="#3f7fa5" stroke-width="0.8"/><path d="M1 3 h13" stroke="#d8eef8" /></svg>
<div style="position:absolute;left:63px;top:73px;height:18px;line-height:18px;white-space:nowrap;font-size:12.7px;color:#111;">Řízení vývoje softwaru</div>
<svg style="left:27px;top:96px" width="10" height="10"><rect x="0.5" y="0.5" width="8" height="8" fill="#fff" stroke="#9a9a9a"/><path d="M2 4.5h5M4.5 2v5" stroke="#2a3f8a"/></svg>
<svg style="left:36px;top:101px" width="6" height="1"><path d="M0 0.5h6" stroke="#888" stroke-dasharray="1 1"/></svg>
<svg style="left:42px;top:93px" width="16" height="14"><defs><linearGradient id="fg" x1="0" y1="0" x2="0" y2="1"><stop offset="0" stop-color="#e9f6fc"/><stop offset="0.5" stop-color="#7fc4e6"/><stop offset="1" stop-color="#0f6d9c"/></linearGradient></defs><path d="M0.5 0.5 h5 l1.5 1.5 h7.5 v10 h-14z" fill="url(#fg)" stroke="#3f7fa5" stroke-width="0.8"/><path d="M1 3 h13" stroke="#d8eef8" /></svg>
<div style="position:absolute;left:63px;top:91px;height:18px;line-height:18px;white-space:nowrap;font-size:12.7px;color:#111;">Aplikace softwarové podpory QI</div>
<svg style="left:27px;top:114px" width="10" height="10"><rect x="0.5" y="0.5" width="8" height="8" fill="#fff" stroke="#9a9a9a"/><path d="M2 4.5h5M4.5 2v5" stroke="#2a3f8a"/></svg>
<svg style="left:36px;top:119px" width="6" height="1"><path d="M0 0.5h6" stroke="#888" stroke-dasharray="1 1"/></svg>
<svg style="left:42px;top:111px" width="16" height="14"><defs><linearGradient id="fg" x1="0" y1="0" x2="0" y2="1"><stop offset="0" stop-color="#e9f6fc"/><stop offset="0.5" stop-color="#7fc4e6"/><stop offset="1" stop-color="#0f6d9c"/></linearGradient></defs><path d="M0.5 0.5 h5 l1.5 1.5 h7.5 v10 h-14z" fill="url(#fg)" stroke="#3f7fa5" stroke-width="0.8"/><path d="M1 3 h13" stroke="#d8eef8" /></svg>
<div style="position:absolute;left:63px;top:109px;height:18px;line-height:18px;white-space:nowrap;font-size:12.7px;color:#111;">Konfigurace a správa systému</div>
<svg style="left:27px;top:132px" width="10" height="10"><rect x="0.5" y="0.5" width="8" height="8" fill="#fff" stroke="#9a9a9a"/><path d="M2 4.5h5" stroke="#2a3f8a"/></svg>
<svg style="left:36px;top:137px" width="6" height="1"><path d="M0 0.5h6" stroke="#888" stroke-dasharray="1 1"/></svg>
<svg style="left:42px;top:129px" width="16" height="14"><defs><linearGradient id="fg" x1="0" y1="0" x2="0" y2="1"><stop offset="0" stop-color="#e9f6fc"/><stop offset="0.5" stop-color="#7fc4e6"/><stop offset="1" stop-color="#0f6d9c"/></linearGradient></defs><path d="M0.5 0.5 h5 l1.5 1.5 h7.5 v10 h-14z" fill="url(#fg)" stroke="#3f7fa5" stroke-width="0.8"/><path d="M1 3 h13" stroke="#d8eef8" /></svg>
<div style="position:absolute;left:63px;top:127px;height:18px;line-height:18px;white-space:nowrap;font-size:12.7px;color:#111;">APLIKACE</div>
<svg style="left:46px;top:150px" width="10" height="10"><rect x="0.5" y="0.5" width="8" height="8" fill="#fff" stroke="#9a9a9a"/><path d="M2 4.5h5M4.5 2v5" stroke="#2a3f8a"/></svg>
<svg style="left:55px;top:155px" width="6" height="1"><path d="M0 0.5h6" stroke="#888" stroke-dasharray="1 1"/></svg>
<svg style="left:61px;top:147px" width="16" height="14"><defs><linearGradient id="fg" x1="0" y1="0" x2="0" y2="1"><stop offset="0" stop-color="#e9f6fc"/><stop offset="0.5" stop-color="#7fc4e6"/><stop offset="1" stop-color="#0f6d9c"/></linearGradient></defs><path d="M0.5 0.5 h5 l1.5 1.5 h7.5 v10 h-14z" fill="url(#fg)" stroke="#3f7fa5" stroke-width="0.8"/><path d="M1 3 h13" stroke="#d8eef8" /></svg>
<div style="position:absolute;left:82px;top:145px;height:18px;line-height:18px;white-space:nowrap;font-size:12.7px;color:#111;">Společné číselníky aplikací</div>
<svg style="left:46px;top:168px" width="10" height="10"><rect x="0.5" y="0.5" width="8" height="8" fill="#fff" stroke="#9a9a9a"/><path d="M2 4.5h5M4.5 2v5" stroke="#2a3f8a"/></svg>
<svg style="left:55px;top:173px" width="6" height="1"><path d="M0 0.5h6" stroke="#888" stroke-dasharray="1 1"/></svg>
<svg style="left:61px;top:165px" width="16" height="14"><defs><linearGradient id="fg" x1="0" y1="0" x2="0" y2="1"><stop offset="0" stop-color="#e9f6fc"/><stop offset="0.5" stop-color="#7fc4e6"/><stop offset="1" stop-color="#0f6d9c"/></linearGradient></defs><path d="M0.5 0.5 h5 l1.5 1.5 h7.5 v10 h-14z" fill="url(#fg)" stroke="#3f7fa5" stroke-width="0.8"/><path d="M1 3 h13" stroke="#d8eef8" /></svg>
<div style="position:absolute;left:82px;top:163px;height:18px;line-height:18px;white-space:nowrap;font-size:12.7px;color:#111;">Obchodní partneři</div>
<svg style="left:46px;top:186px" width="10" height="10"><rect x="0.5" y="0.5" width="8" height="8" fill="#fff" stroke="#9a9a9a"/><path d="M2 4.5h5M4.5 2v5" stroke="#2a3f8a"/></svg>
<svg style="left:55px;top:191px" width="6" height="1"><path d="M0 0.5h6" stroke="#888" stroke-dasharray="1 1"/></svg>
<svg style="left:61px;top:183px" width="16" height="14"><defs><linearGradient id="fg" x1="0" y1="0" x2="0" y2="1"><stop offset="0" stop-color="#e9f6fc"/><stop offset="0.5" stop-color="#7fc4e6"/><stop offset="1" stop-color="#0f6d9c"/></linearGradient></defs><path d="M0.5 0.5 h5 l1.5 1.5 h7.5 v10 h-14z" fill="url(#fg)" stroke="#3f7fa5" stroke-width="0.8"/><path d="M1 3 h13" stroke="#d8eef8" /></svg>
<div style="position:absolute;left:82px;top:181px;height:18px;line-height:18px;white-space:nowrap;font-size:12.7px;color:#111;">Organizace a řízení</div>
<svg style="left:46px;top:204px" width="10" height="10"><rect x="0.5" y="0.5" width="8" height="8" fill="#fff" stroke="#9a9a9a"/><path d="M2 4.5h5M4.5 2v5" stroke="#2a3f8a"/></svg>
<svg style="left:55px;top:209px" width="6" height="1"><path d="M0 0.5h6" stroke="#888" stroke-dasharray="1 1"/></svg>
<svg style="left:61px;top:201px" width="16" height="14"><defs><linearGradient id="fg" x1="0" y1="0" x2="0" y2="1"><stop offset="0" stop-color="#e9f6fc"/><stop offset="0.5" stop-color="#7fc4e6"/><stop offset="1" stop-color="#0f6d9c"/></linearGradient></defs><path d="M0.5 0.5 h5 l1.5 1.5 h7.5 v10 h-14z" fill="url(#fg)" stroke="#3f7fa5" stroke-width="0.8"/><path d="M1 3 h13" stroke="#d8eef8" /></svg>
<div style="position:absolute;left:82px;top:199px;height:18px;line-height:18px;white-space:nowrap;font-size:12.7px;color:#111;">Prodej a nákup</div>
<svg style="left:46px;top:222px" width="10" height="10"><rect x="0.5" y="0.5" width="8" height="8" fill="#fff" stroke="#9a9a9a"/><path d="M2 4.5h5M4.5 2v5" stroke="#2a3f8a"/></svg>
<svg style="left:55px;top:227px" width="6" height="1"><path d="M0 0.5h6" stroke="#888" stroke-dasharray="1 1"/></svg>
<svg style="left:61px;top:219px" width="16" height="14"><defs><linearGradient id="fg" x1="0" y1="0" x2="0" y2="1"><stop offset="0" stop-color="#e9f6fc"/><stop offset="0.5" stop-color="#7fc4e6"/><stop offset="1" stop-color="#0f6d9c"/></linearGradient></defs><path d="M0.5 0.5 h5 l1.5 1.5 h7.5 v10 h-14z" fill="url(#fg)" stroke="#3f7fa5" stroke-width="0.8"/><path d="M1 3 h13" stroke="#d8eef8" /></svg>
<div style="position:absolute;left:82px;top:217px;height:18px;line-height:18px;white-space:nowrap;font-size:12.7px;color:#111;">Řízení vztahů se zákazníky (CRM)</div>
<svg style="left:46px;top:240px" width="10" height="10"><rect x="0.5" y="0.5" width="8" height="8" fill="#fff" stroke="#9a9a9a"/><path d="M2 4.5h5M4.5 2v5" stroke="#2a3f8a"/></svg>
<svg style="left:55px;top:245px" width="6" height="1"><path d="M0 0.5h6" stroke="#888" stroke-dasharray="1 1"/></svg>
<svg style="left:61px;top:237px" width="16" height="14"><defs><linearGradient id="fg" x1="0" y1="0" x2="0" y2="1"><stop offset="0" stop-color="#e9f6fc"/><stop offset="0.5" stop-color="#7fc4e6"/><stop offset="1" stop-color="#0f6d9c"/></linearGradient></defs><path d="M0.5 0.5 h5 l1.5 1.5 h7.5 v10 h-14z" fill="url(#fg)" stroke="#3f7fa5" stroke-width="0.8"/><path d="M1 3 h13" stroke="#d8eef8" /></svg>
<div style="position:absolute;left:82px;top:235px;height:18px;line-height:18px;white-space:nowrap;font-size:12.7px;color:#111;">Komunikace s partnery</div>
<svg style="left:46px;top:258px" width="10" height="10"><rect x="0.5" y="0.5" width="8" height="8" fill="#fff" stroke="#9a9a9a"/><path d="M2 4.5h5M4.5 2v5" stroke="#2a3f8a"/></svg>
<svg style="left:55px;top:263px" width="6" height="1"><path d="M0 0.5h6" stroke="#888" stroke-dasharray="1 1"/></svg>
<svg style="left:61px;top:255px" width="16" height="14"><defs><linearGradient id="fg" x1="0" y1="0" x2="0" y2="1"><stop offset="0" stop-color="#e9f6fc"/><stop offset="0.5" stop-color="#7fc4e6"/><stop offset="1" stop-color="#0f6d9c"/></linearGradient></defs><path d="M0.5 0.5 h5 l1.5 1.5 h7.5 v10 h-14z" fill="url(#fg)" stroke="#3f7fa5" stroke-width="0.8"/><path d="M1 3 h13" stroke="#d8eef8" /></svg>
<div style="position:absolute;left:82px;top:253px;height:18px;line-height:18px;white-space:nowrap;font-size:12.7px;color:#111;">Redakční systém</div>
<svg style="left:46px;top:276px" width="10" height="10"><rect x="0.5" y="0.5" width="8" height="8" fill="#fff" stroke="#9a9a9a"/><path d="M2 4.5h5" stroke="#2a3f8a"/></svg>
<svg style="left:55px;top:281px" width="6" height="1"><path d="M0 0.5h6" stroke="#888" stroke-dasharray="1 1"/></svg>
<svg style="left:61px;top:273px" width="16" height="14"><defs><linearGradient id="fg" x1="0" y1="0" x2="0" y2="1"><stop offset="0" stop-color="#e9f6fc"/><stop offset="0.5" stop-color="#7fc4e6"/><stop offset="1" stop-color="#0f6d9c"/></linearGradient></defs><path d="M0.5 0.5 h5 l1.5 1.5 h7.5 v10 h-14z" fill="url(#fg)" stroke="#3f7fa5" stroke-width="0.8"/><path d="M1 3 h13" stroke="#d8eef8" /></svg>
<div style="position:absolute;left:82px;top:271px;height:18px;line-height:18px;white-space:nowrap;font-size:12.7px;color:#111;">Finance</div>
<svg style="left:65px;top:294px" width="10" height="10"><rect x="0.5" y="0.5" width="8" height="8" fill="#fff" stroke="#9a9a9a"/><path d="M2 4.5h5M4.5 2v5" stroke="#2a3f8a"/></svg>
<svg style="left:74px;top:299px" width="6" height="1"><path d="M0 0.5h6" stroke="#888" stroke-dasharray="1 1"/></svg>
<svg style="left:80px;top:291px" width="16" height="14"><defs><linearGradient id="fg" x1="0" y1="0" x2="0" y2="1"><stop offset="0" stop-color="#e9f6fc"/><stop offset="0.5" stop-color="#7fc4e6"/><stop offset="1" stop-color="#0f6d9c"/></linearGradient></defs><path d="M0.5 0.5 h5 l1.5 1.5 h7.5 v10 h-14z" fill="url(#fg)" stroke="#3f7fa5" stroke-width="0.8"/><path d="M1 3 h13" stroke="#d8eef8" /></svg>
<div style="position:absolute;left:101px;top:289px;height:18px;line-height:18px;white-space:nowrap;font-size:12.7px;color:#111;">Číselníky - Finance</div>
<svg style="left:65px;top:312px" width="10" height="10"><rect x="0.5" y="0.5" width="8" height="8" fill="#fff" stroke="#9a9a9a"/><path d="M2 4.5h5M4.5 2v5" stroke="#2a3f8a"/></svg>
<svg style="left:74px;top:317px" width="6" height="1"><path d="M0 0.5h6" stroke="#888" stroke-dasharray="1 1"/></svg>
<svg style="left:80px;top:309px" width="16" height="14"><defs><linearGradient id="fg" x1="0" y1="0" x2="0" y2="1"><stop offset="0" stop-color="#e9f6fc"/><stop offset="0.5" stop-color="#7fc4e6"/><stop offset="1" stop-color="#0f6d9c"/></linearGradient></defs><path d="M0.5 0.5 h5 l1.5 1.5 h7.5 v10 h-14z" fill="url(#fg)" stroke="#3f7fa5" stroke-width="0.8"/><path d="M1 3 h13" stroke="#d8eef8" /></svg>
<div style="position:absolute;left:101px;top:307px;height:18px;line-height:18px;white-space:nowrap;font-size:12.7px;color:#111;">Pohledávky</div>
<svg style="left:65px;top:330px" width="10" height="10"><rect x="0.5" y="0.5" width="8" height="8" fill="#fff" stroke="#9a9a9a"/><path d="M2 4.5h5M4.5 2v5" stroke="#2a3f8a"/></svg>
<svg style="left:74px;top:335px" width="6" height="1"><path d="M0 0.5h6" stroke="#888" stroke-dasharray="1 1"/></svg>
<svg style="left:80px;top:327px" width="16" height="14"><defs><linearGradient id="fg" x1="0" y1="0" x2="0" y2="1"><stop offset="0" stop-color="#e9f6fc"/><stop offset="0.5" stop-color="#7fc4e6"/><stop offset="1" stop-color="#0f6d9c"/></linearGradient></defs><path d="M0.5 0.5 h5 l1.5 1.5 h7.5 v10 h-14z" fill="url(#fg)" stroke="#3f7fa5" stroke-width="0.8"/><path d="M1 3 h13" stroke="#d8eef8" /></svg>
<div style="position:absolute;left:101px;top:325px;height:18px;line-height:18px;white-space:nowrap;font-size:12.7px;color:#111;">Závazky</div>
<svg style="left:65px;top:348px" width="10" height="10"><rect x="0.5" y="0.5" width="8" height="8" fill="#fff" stroke="#9a9a9a"/><path d="M2 4.5h5M4.5 2v5" stroke="#2a3f8a"/></svg>
<svg style="left:74px;top:353px" width="6" height="1"><path d="M0 0.5h6" stroke="#888" stroke-dasharray="1 1"/></svg>
<svg style="left:80px;top:345px" width="16" height="14"><defs><linearGradient id="fg" x1="0" y1="0" x2="0" y2="1"><stop offset="0" stop-color="#e9f6fc"/><stop offset="0.5" stop-color="#7fc4e6"/><stop offset="1" stop-color="#0f6d9c"/></linearGradient></defs><path d="M0.5 0.5 h5 l1.5 1.5 h7.5 v10 h-14z" fill="url(#fg)" stroke="#3f7fa5" stroke-width="0.8"/><path d="M1 3 h13" stroke="#d8eef8" /></svg>
<div style="position:absolute;left:101px;top:343px;height:18px;line-height:18px;white-space:nowrap;font-size:12.7px;color:#111;">Platby</div>
<svg style="left:65px;top:366px" width="10" height="10"><rect x="0.5" y="0.5" width="8" height="8" fill="#fff" stroke="#9a9a9a"/><path d="M2 4.5h5" stroke="#2a3f8a"/></svg>
<svg style="left:74px;top:371px" width="6" height="1"><path d="M0 0.5h6" stroke="#888" stroke-dasharray="1 1"/></svg>
<svg style="left:80px;top:363px" width="16" height="14"><defs><linearGradient id="fg" x1="0" y1="0" x2="0" y2="1"><stop offset="0" stop-color="#e9f6fc"/><stop offset="0.5" stop-color="#7fc4e6"/><stop offset="1" stop-color="#0f6d9c"/></linearGradient></defs><path d="M0.5 0.5 h5 l1.5 1.5 h7.5 v10 h-14z" fill="url(#fg)" stroke="#3f7fa5" stroke-width="0.8"/><path d="M1 3 h13" stroke="#d8eef8" /></svg>
<div style="position:absolute;left:101px;top:361px;height:18px;line-height:18px;white-space:nowrap;font-size:12.7px;color:#111;">DPH</div>
<svg style="left:88px;top:388px" width="12" height="1"><path d="M0 0.5h12" stroke="#888" stroke-dasharray="1 1"/></svg>
<svg style="left:104px;top:382px" width="8" height="12"><path d="M0.5 0.5 L7 6 L0.5 11.5Z" fill="#1c6a9c"/></svg>
<div style="position:absolute;left:120px;top:379px;height:18px;line-height:18px;white-space:nowrap;font-size:12.7px;color:#111;">Podklady pro DPH</div>
<svg style="left:88px;top:406px" width="12" height="1"><path d="M0 0.5h12" stroke="#888" stroke-dasharray="1 1"/></svg>
<svg style="left:104px;top:400px" width="8" height="12"><path d="M0.5 0.5 L7 6 L0.5 11.5Z" fill="#1c6a9c"/></svg>
<div style="position:absolute;left:120px;top:397px;height:18px;line-height:18px;white-space:nowrap;font-size:12.7px;color:#111;">Podklady pro DPH mimo tuzemsko</div>
<svg style="left:88px;top:424px" width="12" height="1"><path d="M0 0.5h12" stroke="#888" stroke-dasharray="1 1"/></svg>
<svg style="left:104px;top:418px" width="8" height="12"><path d="M0.5 0.5 L7 6 L0.5 11.5Z" fill="#1c6a9c"/></svg>
<div style="position:absolute;left:120px;top:415px;height:18px;line-height:18px;white-space:nowrap;font-size:12.7px;color:#111;">Podklady pro DPH v režimu MOSS</div>
<svg style="left:88px;top:442px" width="12" height="1"><path d="M0 0.5h12" stroke="#888" stroke-dasharray="1 1"/></svg>
<svg style="left:104px;top:436px" width="8" height="12"><path d="M0.5 0.5 L7 6 L0.5 11.5Z" fill="#1c6a9c"/></svg>
<div style="position:absolute;left:120px;top:433px;height:18px;line-height:18px;white-space:nowrap;font-size:12.7px;color:#111;">Podklady pro Kontrolní hlášení DPH</div>
<svg style="left:88px;top:460px" width="12" height="1"><path d="M0 0.5h12" stroke="#888" stroke-dasharray="1 1"/></svg>
<svg style="left:104px;top:454px" width="8" height="12"><path d="M0.5 0.5 L7 6 L0.5 11.5Z" fill="#1c6a9c"/></svg>
<div style="position:absolute;left:120px;top:451px;height:18px;line-height:18px;white-space:nowrap;font-size:12.7px;color:#111;">Seznam kontrolních hlášení DPH</div>
<svg style="left:88px;top:478px" width="12" height="1"><path d="M0 0.5h12" stroke="#888" stroke-dasharray="1 1"/></svg>
<svg style="left:104px;top:472px" width="8" height="12"><path d="M0.5 0.5 L7 6 L0.5 11.5Z" fill="#1c6a9c"/></svg>
<div style="position:absolute;left:120px;top:469px;height:18px;line-height:18px;white-space:nowrap;font-size:12.7px;color:#111;">Doplňující údaje k daňovému přiznání</div>
<svg style="left:88px;top:496px" width="12" height="1"><path d="M0 0.5h12" stroke="#888" stroke-dasharray="1 1"/></svg>
<svg style="left:104px;top:490px" width="8" height="12"><path d="M0.5 0.5 L7 6 L0.5 11.5Z" fill="#1c6a9c"/></svg>
<div style="position:absolute;left:120px;top:487px;height:18px;line-height:18px;white-space:nowrap;font-size:12.7px;color:#111;">Seznam uzavřených období DPH</div>
<svg style="left:88px;top:514px" width="12" height="1"><path d="M0 0.5h12" stroke="#888" stroke-dasharray="1 1"/></svg>
<svg style="left:104px;top:508px" width="8" height="12"><path d="M0.5 0.5 L7 6 L0.5 11.5Z" fill="#1c6a9c"/></svg>
<div style="position:absolute;left:120px;top:505px;height:18px;line-height:18px;white-space:nowrap;font-size:12.7px;color:#111;">Souhrnné hlášení</div>
<svg style="left:88px;top:532px" width="12" height="1"><path d="M0 0.5h12" stroke="#888" stroke-dasharray="1 1"/></svg>
<svg style="left:104px;top:526px" width="8" height="12"><path d="M0.5 0.5 L7 6 L0.5 11.5Z" fill="#1c6a9c"/></svg>
<div style="position:absolute;left:120px;top:523px;height:18px;line-height:18px;white-space:nowrap;font-size:12.7px;color:#111;">Přiřazení indexů k přiznání</div>
<svg style="left:88px;top:550px" width="12" height="1"><path d="M0 0.5h12" stroke="#888" stroke-dasharray="1 1"/></svg>
<svg style="left:104px;top:544px" width="8" height="12"><path d="M0.5 0.5 L7 6 L0.5 11.5Z" fill="#1c6a9c"/></svg>
<div style="position:absolute;left:120px;top:541px;height:18px;line-height:18px;white-space:nowrap;font-size:12.7px;color:#111;">Daňové položky bez zadaného období</div>
<svg style="left:65px;top:564px" width="10" height="10"><rect x="0.5" y="0.5" width="8" height="8" fill="#fff" stroke="#9a9a9a"/><path d="M2 4.5h5M4.5 2v5" stroke="#2a3f8a"/></svg>
<svg style="left:74px;top:569px" width="6" height="1"><path d="M0 0.5h6" stroke="#888" stroke-dasharray="1 1"/></svg>
<svg style="left:80px;top:561px" width="16" height="14"><defs><linearGradient id="fg" x1="0" y1="0" x2="0" y2="1"><stop offset="0" stop-color="#e9f6fc"/><stop offset="0.5" stop-color="#7fc4e6"/><stop offset="1" stop-color="#0f6d9c"/></linearGradient></defs><path d="M0.5 0.5 h5 l1.5 1.5 h7.5 v10 h-14z" fill="url(#fg)" stroke="#3f7fa5" stroke-width="0.8"/><path d="M1 3 h13" stroke="#d8eef8" /></svg>
<div style="position:absolute;left:101px;top:559px;height:18px;line-height:18px;white-space:nowrap;font-size:12.7px;color:#111;">Silniční daň</div>
<svg style="left:65px;top:582px" width="10" height="10"><rect x="0.5" y="0.5" width="8" height="8" fill="#fff" stroke="#9a9a9a"/><path d="M2 4.5h5M4.5 2v5" stroke="#2a3f8a"/></svg>
<svg style="left:74px;top:587px" width="6" height="1"><path d="M0 0.5h6" stroke="#888" stroke-dasharray="1 1"/></svg>
<svg style="left:80px;top:579px" width="16" height="14"><defs><linearGradient id="fg" x1="0" y1="0" x2="0" y2="1"><stop offset="0" stop-color="#e9f6fc"/><stop offset="0.5" stop-color="#7fc4e6"/><stop offset="1" stop-color="#0f6d9c"/></linearGradient></defs><path d="M0.5 0.5 h5 l1.5 1.5 h7.5 v10 h-14z" fill="url(#fg)" stroke="#3f7fa5" stroke-width="0.8"/><path d="M1 3 h13" stroke="#d8eef8" /></svg>
<div style="position:absolute;left:101px;top:577px;height:18px;line-height:18px;white-space:nowrap;font-size:12.7px;color:#111;">Kurzové rozdíly nerealizované</div>
<svg style="left:65px;top:600px" width="10" height="10"><rect x="0.5" y="0.5" width="8" height="8" fill="#fff" stroke="#9a9a9a"/><path d="M2 4.5h5M4.5 2v5" stroke="#2a3f8a"/></svg>
<svg style="left:74px;top:605px" width="6" height="1"><path d="M0 0.5h6" stroke="#888" stroke-dasharray="1 1"/></svg>
<svg style="left:80px;top:597px" width="16" height="14"><defs><linearGradient id="fg" x1="0" y1="0" x2="0" y2="1"><stop offset="0" stop-color="#e9f6fc"/><stop offset="0.5" stop-color="#7fc4e6"/><stop offset="1" stop-color="#0f6d9c"/></linearGradient></defs><path d="M0.5 0.5 h5 l1.5 1.5 h7.5 v10 h-14z" fill="url(#fg)" stroke="#3f7fa5" stroke-width="0.8"/><path d="M1 3 h13" stroke="#d8eef8" /></svg>
<div style="position:absolute;left:101px;top:595px;height:18px;line-height:18px;white-space:nowrap;font-size:12.7px;color:#111;">Import kurzovních lístků</div>
<svg style="left:65px;top:618px" width="10" height="10"><rect x="0.5" y="0.5" width="8" height="8" fill="#fff" stroke="#9a9a9a"/><path d="M2 4.5h5M4.5 2v5" stroke="#2a3f8a"/></svg>
<svg style="left:74px;top:623px" width="6" height="1"><path d="M0 0.5h6" stroke="#888" stroke-dasharray="1 1"/></svg>
<svg style="left:80px;top:615px" width="16" height="14"><defs><linearGradient id="fg" x1="0" y1="0" x2="0" y2="1"><stop offset="0" stop-color="#e9f6fc"/><stop offset="0.5" stop-color="#7fc4e6"/><stop offset="1" stop-color="#0f6d9c"/></linearGradient></defs><path d="M0.5 0.5 h5 l1.5 1.5 h7.5 v10 h-14z" fill="url(#fg)" stroke="#3f7fa5" stroke-width="0.8"/><path d="M1 3 h13" stroke="#d8eef8" /></svg>
<div style="position:absolute;left:101px;top:613px;height:18px;line-height:18px;white-space:nowrap;font-size:12.7px;color:#111;">Controlling (finanční plánování a řízení)</div>
<svg style="left:65px;top:636px" width="10" height="10"><rect x="0.5" y="0.5" width="8" height="8" fill="#fff" stroke="#9a9a9a"/><path d="M2 4.5h5M4.5 2v5" stroke="#2a3f8a"/></svg>
<svg style="left:74px;top:641px" width="6" height="1"><path d="M0 0.5h6" stroke="#888" stroke-dasharray="1 1"/></svg>
<svg style="left:80px;top:633px" width="16" height="14"><defs><linearGradient id="fg" x1="0" y1="0" x2="0" y2="1"><stop offset="0" stop-color="#e9f6fc"/><stop offset="0.5" stop-color="#7fc4e6"/><stop offset="1" stop-color="#0f6d9c"/></linearGradient></defs><path d="M0.5 0.5 h5 l1.5 1.5 h7.5 v10 h-14z" fill="url(#fg)" stroke="#3f7fa5" stroke-width="0.8"/><path d="M1 3 h13" stroke="#d8eef8" /></svg>
<div style="position:absolute;left:101px;top:631px;height:18px;line-height:18px;white-space:nowrap;font-size:12.7px;color:#111;">EET</div>
<svg style="left:46px;top:654px" width="10" height="10"><rect x="0.5" y="0.5" width="8" height="8" fill="#fff" stroke="#9a9a9a"/><path d="M2 4.5h5M4.5 2v5" stroke="#2a3f8a"/></svg>
<svg style="left:55px;top:659px" width="6" height="1"><path d="M0 0.5h6" stroke="#888" stroke-dasharray="1 1"/></svg>
<svg style="left:61px;top:651px" width="16" height="14"><defs><linearGradient id="fg" x1="0" y1="0" x2="0" y2="1"><stop offset="0" stop-color="#e9f6fc"/><stop offset="0.5" stop-color="#7fc4e6"/><stop offset="1" stop-color="#0f6d9c"/></linearGradient></defs><path d="M0.5 0.5 h5 l1.5 1.5 h7.5 v10 h-14z" fill="url(#fg)" stroke="#3f7fa5" stroke-width="0.8"/><path d="M1 3 h13" stroke="#d8eef8" /></svg>
<div style="position:absolute;left:82px;top:649px;height:18px;line-height:18px;white-space:nowrap;font-size:12.7px;color:#111;">Podvojné účetnictví</div>
<svg style="left:46px;top:672px" width="10" height="10"><rect x="0.5" y="0.5" width="8" height="8" fill="#fff" stroke="#9a9a9a"/><path d="M2 4.5h5M4.5 2v5" stroke="#2a3f8a"/></svg>
<svg style="left:55px;top:677px" width="6" height="1"><path d="M0 0.5h6" stroke="#888" stroke-dasharray="1 1"/></svg>
<svg style="left:61px;top:669px" width="16" height="14"><defs><linearGradient id="fg" x1="0" y1="0" x2="0" y2="1"><stop offset="0" stop-color="#e9f6fc"/><stop offset="0.5" stop-color="#7fc4e6"/><stop offset="1" stop-color="#0f6d9c"/></linearGradient></defs><path d="M0.5 0.5 h5 l1.5 1.5 h7.5 v10 h-14z" fill="url(#fg)" stroke="#3f7fa5" stroke-width="0.8"/><path d="M1 3 h13" stroke="#d8eef8" /></svg>
<div style="position:absolute;left:82px;top:667px;height:18px;line-height:18px;white-space:nowrap;font-size:12.7px;color:#111;">Sklady</div>
<svg style="left:46px;top:690px" width="10" height="10"><rect x="0.5" y="0.5" width="8" height="8" fill="#fff" stroke="#9a9a9a"/><path d="M2 4.5h5M4.5 2v5" stroke="#2a3f8a"/></svg>
<svg style="left:55px;top:695px" width="6" height="1"><path d="M0 0.5h6" stroke="#888" stroke-dasharray="1 1"/></svg>
<svg style="left:61px;top:687px" width="16" height="14"><defs><linearGradient id="fg" x1="0" y1="0" x2="0" y2="1"><stop offset="0" stop-color="#e9f6fc"/><stop offset="0.5" stop-color="#7fc4e6"/><stop offset="1" stop-color="#0f6d9c"/></linearGradient></defs><path d="M0.5 0.5 h5 l1.5 1.5 h7.5 v10 h-14z" fill="url(#fg)" stroke="#3f7fa5" stroke-width="0.8"/><path d="M1 3 h13" stroke="#d8eef8" /></svg>
<div style="position:absolute;left:82px;top:685px;height:18px;line-height:18px;white-space:nowrap;font-size:12.7px;color:#111;">Doprava</div>
<svg style="left:46px;top:708px" width="10" height="10"><rect x="0.5" y="0.5" width="8" height="8" fill="#fff" stroke="#9a9a9a"/><path d="M2 4.5h5M4.5 2v5" stroke="#2a3f8a"/></svg>
<svg style="left:55px;top:713px" width="6" height="1"><path d="M0 0.5h6" stroke="#888" stroke-dasharray="1 1"/></svg>
<svg style="left:61px;top:705px" width="16" height="14"><defs><linearGradient id="fg" x1="0" y1="0" x2="0" y2="1"><stop offset="0" stop-color="#e9f6fc"/><stop offset="0.5" stop-color="#7fc4e6"/><stop offset="1" stop-color="#0f6d9c"/></linearGradient></defs><path d="M0.5 0.5 h5 l1.5 1.5 h7.5 v10 h-14z" fill="url(#fg)" stroke="#3f7fa5" stroke-width="0.8"/><path d="M1 3 h13" stroke="#d8eef8" /></svg>
<div style="position:absolute;left:82px;top:703px;height:18px;line-height:18px;white-space:nowrap;font-size:12.7px;color:#111;">Personalistika</div>
<svg style="left:46px;top:726px" width="10" height="10"><rect x="0.5" y="0.5" width="8" height="8" fill="#fff" stroke="#9a9a9a"/><path d="M2 4.5h5M4.5 2v5" stroke="#2a3f8a"/></svg>
<svg style="left:55px;top:731px" width="6" height="1"><path d="M0 0.5h6" stroke="#888" stroke-dasharray="1 1"/></svg>
<svg style="left:61px;top:723px" width="16" height="14"><defs><linearGradient id="fg" x1="0" y1="0" x2="0" y2="1"><stop offset="0" stop-color="#e9f6fc"/><stop offset="0.5" stop-color="#7fc4e6"/><stop offset="1" stop-color="#0f6d9c"/></linearGradient></defs><path d="M0.5 0.5 h5 l1.5 1.5 h7.5 v10 h-14z" fill="url(#fg)" stroke="#3f7fa5" stroke-width="0.8"/><path d="M1 3 h13" stroke="#d8eef8" /></svg>
<div style="position:absolute;left:82px;top:721px;height:18px;line-height:18px;white-space:nowrap;font-size:12.7px;color:#111;">Mzdy</div>
<svg style="left:46px;top:744px" width="10" height="10"><rect x="0.5" y="0.5" width="8" height="8" fill="#fff" stroke="#9a9a9a"/><path d="M2 4.5h5M4.5 2v5" stroke="#2a3f8a"/></svg>
<svg style="left:55px;top:749px" width="6" height="1"><path d="M0 0.5h6" stroke="#888" stroke-dasharray="1 1"/></svg>
<svg style="left:61px;top:741px" width="16" height="14"><defs><linearGradient id="fg" x1="0" y1="0" x2="0" y2="1"><stop offset="0" stop-color="#e9f6fc"/><stop offset="0.5" stop-color="#7fc4e6"/><stop offset="1" stop-color="#0f6d9c"/></linearGradient></defs><path d="M0.5 0.5 h5 l1.5 1.5 h7.5 v10 h-14z" fill="url(#fg)" stroke="#3f7fa5" stroke-width="0.8"/><path d="M1 3 h13" stroke="#d8eef8" /></svg>
<div style="position:absolute;left:82px;top:739px;height:18px;line-height:18px;white-space:nowrap;font-size:12.7px;color:#111;">Majetek</div>
<svg style="left:46px;top:762px" width="10" height="10"><rect x="0.5" y="0.5" width="8" height="8" fill="#fff" stroke="#9a9a9a"/><path d="M2 4.5h5M4.5 2v5" stroke="#2a3f8a"/></svg>
<svg style="left:55px;top:767px" width="6" height="1"><path d="M0 0.5h6" stroke="#888" stroke-dasharray="1 1"/></svg>
<svg style="left:61px;top:759px" width="16" height="14"><defs><linearGradient id="fg" x1="0" y1="0" x2="0" y2="1"><stop offset="0" stop-color="#e9f6fc"/><stop offset="0.5" stop-color="#7fc4e6"/><stop offset="1" stop-color="#0f6d9c"/></linearGradient></defs><path d="M0.5 0.5 h5 l1.5 1.5 h7.5 v10 h-14z" fill="url(#fg)" stroke="#3f7fa5" stroke-width="0.8"/><path d="M1 3 h13" stroke="#d8eef8" /></svg>
<div style="position:absolute;left:82px;top:757px;height:18px;line-height:18px;white-space:nowrap;font-size:12.7px;color:#111;">Procesy, workflow</div>
<svg style="left:46px;top:780px" width="10" height="10"><rect x="0.5" y="0.5" width="8" height="8" fill="#fff" stroke="#9a9a9a"/><path d="M2 4.5h5M4.5 2v5" stroke="#2a3f8a"/></svg>
<svg style="left:55px;top:785px" width="6" height="1"><path d="M0 0.5h6" stroke="#888" stroke-dasharray="1 1"/></svg>
<svg style="left:61px;top:777px" width="16" height="14"><defs><linearGradient id="fg" x1="0" y1="0" x2="0" y2="1"><stop offset="0" stop-color="#e9f6fc"/><stop offset="0.5" stop-color="#7fc4e6"/><stop offset="1" stop-color="#0f6d9c"/></linearGradient></defs><path d="M0.5 0.5 h5 l1.5 1.5 h7.5 v10 h-14z" fill="url(#fg)" stroke="#3f7fa5" stroke-width="0.8"/><path d="M1 3 h13" stroke="#d8eef8" /></svg>
<div style="position:absolute;left:82px;top:775px;height:18px;line-height:18px;white-space:nowrap;font-size:12.7px;color:#111;">Projekty</div>
<svg style="left:46px;top:798px" width="10" height="10"><rect x="0.5" y="0.5" width="8" height="8" fill="#fff" stroke="#9a9a9a"/><path d="M2 4.5h5M4.5 2v5" stroke="#2a3f8a"/></svg>
<svg style="left:55px;top:803px" width="6" height="1"><path d="M0 0.5h6" stroke="#888" stroke-dasharray="1 1"/></svg>
<svg style="left:61px;top:795px" width="16" height="14"><defs><linearGradient id="fg" x1="0" y1="0" x2="0" y2="1"><stop offset="0" stop-color="#e9f6fc"/><stop offset="0.5" stop-color="#7fc4e6"/><stop offset="1" stop-color="#0f6d9c"/></linearGradient></defs><path d="M0.5 0.5 h5 l1.5 1.5 h7.5 v10 h-14z" fill="url(#fg)" stroke="#3f7fa5" stroke-width="0.8"/><path d="M1 3 h13" stroke="#d8eef8" /></svg>
<div style="position:absolute;left:82px;top:793px;height:18px;line-height:18px;white-space:nowrap;font-size:12.7px;color:#111;">Plánování</div>
<svg style="left:46px;top:816px" width="10" height="10"><rect x="0.5" y="0.5" width="8" height="8" fill="#fff" stroke="#9a9a9a"/><path d="M2 4.5h5M4.5 2v5" stroke="#2a3f8a"/></svg>
<svg style="left:55px;top:821px" width="6" height="1"><path d="M0 0.5h6" stroke="#888" stroke-dasharray="1 1"/></svg>
<svg style="left:61px;top:813px" width="16" height="14"><defs><linearGradient id="fg" x1="0" y1="0" x2="0" y2="1"><stop offset="0" stop-color="#e9f6fc"/><stop offset="0.5" stop-color="#7fc4e6"/><stop offset="1" stop-color="#0f6d9c"/></linearGradient></defs><path d="M0.5 0.5 h5 l1.5 1.5 h7.5 v10 h-14z" fill="url(#fg)" stroke="#3f7fa5" stroke-width="0.8"/><path d="M1 3 h13" stroke="#d8eef8" /></svg>
<div style="position:absolute;left:82px;top:811px;height:18px;line-height:18px;white-space:nowrap;font-size:12.7px;color:#111;">Servis</div>
<svg style="left:46px;top:834px" width="10" height="10"><rect x="0.5" y="0.5" width="8" height="8" fill="#fff" stroke="#9a9a9a"/><path d="M2 4.5h5M4.5 2v5" stroke="#2a3f8a"/></svg>
<svg style="left:55px;top:839px" width="6" height="1"><path d="M0 0.5h6" stroke="#888" stroke-dasharray="1 1"/></svg>
<svg style="left:61px;top:831px" width="16" height="14"><defs><linearGradient id="fg" x1="0" y1="0" x2="0" y2="1"><stop offset="0" stop-color="#e9f6fc"/><stop offset="0.5" stop-color="#7fc4e6"/><stop offset="1" stop-color="#0f6d9c"/></linearGradient></defs><path d="M0.5 0.5 h5 l1.5 1.5 h7.5 v10 h-14z" fill="url(#fg)" stroke="#3f7fa5" stroke-width="0.8"/><path d="M1 3 h13" stroke="#d8eef8" /></svg>
<div style="position:absolute;left:82px;top:829px;height:18px;line-height:18px;white-space:nowrap;font-size:12.7px;color:#111;">Výroba</div>
<svg style="left:46px;top:852px" width="10" height="10"><rect x="0.5" y="0.5" width="8" height="8" fill="#fff" stroke="#9a9a9a"/><path d="M2 4.5h5M4.5 2v5" stroke="#2a3f8a"/></svg>
<svg style="left:55px;top:857px" width="6" height="1"><path d="M0 0.5h6" stroke="#888" stroke-dasharray="1 1"/></svg>
<svg style="left:61px;top:849px" width="16" height="14"><defs><linearGradient id="fg" x1="0" y1="0" x2="0" y2="1"><stop offset="0" stop-color="#e9f6fc"/><stop offset="0.5" stop-color="#7fc4e6"/><stop offset="1" stop-color="#0f6d9c"/></linearGradient></defs><path d="M0.5 0.5 h5 l1.5 1.5 h7.5 v10 h-14z" fill="url(#fg)" stroke="#3f7fa5" stroke-width="0.8"/><path d="M1 3 h13" stroke="#d8eef8" /></svg>
<div style="position:absolute;left:82px;top:847px;height:18px;line-height:18px;white-space:nowrap;font-size:12.7px;color:#111;">Nářadí</div>
<svg style="left:46px;top:870px" width="10" height="10"><rect x="0.5" y="0.5" width="8" height="8" fill="#fff" stroke="#9a9a9a"/><path d="M2 4.5h5M4.5 2v5" stroke="#2a3f8a"/></svg>
<svg style="left:55px;top:875px" width="6" height="1"><path d="M0 0.5h6" stroke="#888" stroke-dasharray="1 1"/></svg>
<svg style="left:61px;top:867px" width="16" height="14"><defs><linearGradient id="fg" x1="0" y1="0" x2="0" y2="1"><stop offset="0" stop-color="#e9f6fc"/><stop offset="0.5" stop-color="#7fc4e6"/><stop offset="1" stop-color="#0f6d9c"/></linearGradient></defs><path d="M0.5 0.5 h5 l1.5 1.5 h7.5 v10 h-14z" fill="url(#fg)" stroke="#3f7fa5" stroke-width="0.8"/><path d="M1 3 h13" stroke="#d8eef8" /></svg>
<div style="position:absolute;left:82px;top:865px;height:18px;line-height:18px;white-space:nowrap;font-size:12.7px;color:#111;">Kompletace</div>
<svg style="left:46px;top:888px" width="10" height="10"><rect x="0.5" y="0.5" width="8" height="8" fill="#fff" stroke="#9a9a9a"/><path d="M2 4.5h5M4.5 2v5" stroke="#2a3f8a"/></svg>
<svg style="left:55px;top:893px" width="6" height="1"><path d="M0 0.5h6" stroke="#888" stroke-dasharray="1 1"/></svg>
<svg style="left:61px;top:885px" width="16" height="14"><defs><linearGradient id="fg" x1="0" y1="0" x2="0" y2="1"><stop offset="0" stop-color="#e9f6fc"/><stop offset="0.5" stop-color="#7fc4e6"/><stop offset="1" stop-color="#0f6d9c"/></linearGradient></defs><path d="M0.5 0.5 h5 l1.5 1.5 h7.5 v10 h-14z" fill="url(#fg)" stroke="#3f7fa5" stroke-width="0.8"/><path d="M1 3 h13" stroke="#d8eef8" /></svg>
<div style="position:absolute;left:82px;top:883px;height:18px;line-height:18px;white-space:nowrap;font-size:12.7px;color:#111;">Evidence instalací softwaru</div>
<svg style="left:46px;top:906px" width="10" height="10"><rect x="0.5" y="0.5" width="8" height="8" fill="#fff" stroke="#9a9a9a"/><path d="M2 4.5h5M4.5 2v5" stroke="#2a3f8a"/></svg>
<svg style="left:55px;top:911px" width="6" height="1"><path d="M0 0.5h6" stroke="#888" stroke-dasharray="1 1"/></svg>
<svg style="left:61px;top:903px" width="16" height="14"><defs><linearGradient id="fg" x1="0" y1="0" x2="0" y2="1"><stop offset="0" stop-color="#e9f6fc"/><stop offset="0.5" stop-color="#7fc4e6"/><stop offset="1" stop-color="#0f6d9c"/></linearGradient></defs><path d="M0.5 0.5 h5 l1.5 1.5 h7.5 v10 h-14z" fill="url(#fg)" stroke="#3f7fa5" stroke-width="0.8"/><path d="M1 3 h13" stroke="#d8eef8" /></svg>
<div style="position:absolute;left:82px;top:901px;height:18px;line-height:18px;white-space:nowrap;font-size:12.7px;color:#111;">Evidence instalací pro partnery</div>
<svg style="left:46px;top:924px" width="10" height="10"><rect x="0.5" y="0.5" width="8" height="8" fill="#fff" stroke="#9a9a9a"/><path d="M2 4.5h5M4.5 2v5" stroke="#2a3f8a"/></svg>
<svg style="left:55px;top:929px" width="6" height="1"><path d="M0 0.5h6" stroke="#888" stroke-dasharray="1 1"/></svg>
<svg style="left:61px;top:921px" width="16" height="14"><defs><linearGradient id="fg" x1="0" y1="0" x2="0" y2="1"><stop offset="0" stop-color="#e9f6fc"/><stop offset="0.5" stop-color="#7fc4e6"/><stop offset="1" stop-color="#0f6d9c"/></linearGradient></defs><path d="M0.5 0.5 h5 l1.5 1.5 h7.5 v10 h-14z" fill="url(#fg)" stroke="#3f7fa5" stroke-width="0.8"/><path d="M1 3 h13" stroke="#d8eef8" /></svg>
<div style="position:absolute;left:82px;top:919px;height:18px;line-height:18px;white-space:nowrap;font-size:12.7px;color:#111;">Konsolidace a ostatní</div>
</div>
<div style="position:absolute;left:364px;top:121px;width:17px;height:17px;background:#f7fafd"></div>
<svg style="left:368px;top:124px;" width="10" height="8"><path d="M1 6 L5 2 L9 6" fill="none" stroke="#111" stroke-width="2"/></svg>
<div style="position:absolute;left:364px;top:138px;width:17px;height:743px;background:#d6e5f3"></div>
<div style="position:absolute;left:364px;top:881px;width:17px;height:147px;background:#f0f5fa"></div>
<div style="position:absolute;left:364px;top:1028px;width:17px;height:17px;background:#f7fafd"></div>
<svg style="left:368px;top:1033px;" width="10" height="8"><path d="M1 2 L5 6 L9 2" fill="none" stroke="#111" stroke-width="2"/></svg>
<div style="position:absolute;left:387px;top:72px;width:1291px;height:976px;background:#024b96"></div>
<div style="position:absolute;left:518px;top:72px;width:1px;height:976px;background:#d9e6f4"></div>
<div style="position:absolute;left:658px;top:72px;width:1px;height:976px;background:#d9e6f4"></div>
<div style="position:absolute;left:797px;top:72px;width:1px;height:976px;background:#d9e6f4"></div>
<div style="position:absolute;left:937px;top:72px;width:1px;height:976px;background:#d9e6f4"></div>
<div style="position:absolute;left:1077px;top:72px;width:1px;height:976px;background:#d9e6f4"></div>
<div style="position:absolute;left:1217px;top:72px;width:1px;height:976px;background:#d9e6f4"></div>
<div style="position:absolute;left:1356px;top:72px;width:1px;height:976px;background:#d9e6f4"></div>
<div style="position:absolute;left:387px;top:211px;width:1291px;height:1px;background:#d9e6f4"></div>
<div style="position:absolute;left:387px;top:351px;width:1291px;height:1px;background:#d9e6f4"></div>
<div style="position:absolute;left:387px;top:491px;width:1291px;height:1px;background:#d9e6f4"></div>
<div style="position:absolute;left:387px;top:631px;width:1291px;height:1px;background:#d9e6f4"></div>
<div style="position:absolute;left:387px;top:770px;width:1291px;height:1px;background:#d9e6f4"></div>
<div style="position:absolute;left:387px;top:910px;width:1291px;height:1px;background:#d9e6f4"></div>
<svg style="left:1350px;top:72px;" width="330" height="150"><defs><clipPath id="lc"><rect x="0" y="0" width="330" height="139"/></clipPath></defs><g clip-path="url(#lc)"><circle cx="75.5" cy="69.5" r="69.5" fill="#fcfcfc"/><circle cx="76" cy="69.5" r="37" fill="#024b96"/><path d="M76 32 V107 M39 69.5 H113" stroke="#d9e6f4" stroke-width="1"/><path d="M101 70 L144 114.5 L121 139 L77 95Z" fill="#fcfcfc"/></g></svg>
<svg style="left:1496px;top:72px;" width="45" height="976"><rect x="0" y="139" width="45" height="837" fill="#024b96"/><rect x="0" y="139" width="1" height="837" fill="#eef4fa"/><rect x="9" y="139" width="1" height="837" fill="#eef4fa"/><rect x="17" y="139" width="1" height="837" fill="#eef4fa"/><rect x="26" y="139" width="1" height="837" fill="#eef4fa"/><rect x="35" y="139" width="1" height="837" fill="#eef4fa"/><rect x="44" y="139" width="1" height="837" fill="#eef4fa"/><rect x="0" y="139" width="45" height="1" fill="#eef4fa"/><rect x="0" y="148" width="45" height="1" fill="#eef4fa"/><rect x="0" y="157" width="45" height="1" fill="#eef4fa"/><rect x="0" y="166" width="45" height="1" fill="#eef4fa"/><rect x="0" y="174" width="45" height="1" fill="#eef4fa"/><rect x="0" y="183" width="45" height="1" fill="#eef4fa"/><rect x="0" y="192" width="45" height="1" fill="#eef4fa"/><rect x="0" y="201" width="45" height="1" fill="#eef4fa"/><rect x="0" y="209" width="45" height="1" fill="#eef4fa"/><rect x="0" y="218" width="45" height="1" fill="#eef4fa"/><rect x="0" y="227" width="45" height="1" fill="#eef4fa"/><rect x="0" y="236" width="45" height="1" fill="#eef4fa"/><rect x="0" y="244" width="45" height="1" fill="#eef4fa"/><rect x="0" y="253" width="45" height="1" fill="#eef4fa"/><rect x="0" y="262" width="45" height="1" fill="#eef4fa"/><rect x="0" y="271" width="45" height="1" fill="#eef4fa"/><rect x="0" y="279" width="45" height="1" fill="#eef4fa"/><rect x="0" y="288" width="45" height="1" fill="#eef4fa"/><rect x="0" y="297" width="45" height="1" fill="#eef4fa"/><rect x="0" y="306" width="45" height="1" fill="#eef4fa"/><rect x="0" y="314" width="45" height="1" fill="#eef4fa"/><rect x="0" y="323" width="45" height="1" fill="#eef4fa"/><rect x="0" y="332" width="45" height="1" fill="#eef4fa"/><rect x="0" y="341" width="45" height="1" fill="#eef4fa"/><rect x="0" y="349" width="45" height="1" fill="#eef4fa"/><rect x="0" y="358" width="45" height="1" fill="#eef4fa"/><rect x="0" y="367" width="45" height="1" fill="#eef4fa"/><rect x="0" y="376" width="45" height="1" fill="#eef4fa"/><rect x="0" y="384" width="45" height="1" fill="#eef4fa"/><rect x="0" y="393" width="45" height="1" fill="#eef4fa"/><rect x="0" y="402" width="45" height="1" fill="#eef4fa"/><rect x="0" y="411" width="45" height="1" fill="#eef4fa"/><rect x="0" y="419" width="45" height="1" fill="#eef4fa"/><rect x="0" y="428" width="45" height="1" fill="#eef4fa"/><rect x="0" y="437" width="45" height="1" fill="#eef4fa"/><rect x="0" y="446" width="45" height="1" fill="#eef4fa"/><rect x="0" y="454" width="45" height="1" fill="#eef4fa"/><rect x="0" y="463" width="45" height="1" fill="#eef4fa"/><rect x="0" y="472" width="45" height="1" fill="#eef4fa"/><rect x="0" y="481" width="45" height="1" fill="#eef4fa"/><rect x="0" y="489" width="45" height="1" fill="#eef4fa"/><rect x="0" y="498" width="45" height="1" fill="#eef4fa"/><rect x="0" y="507" width="45" height="1" fill="#eef4fa"/><rect x="0" y="516" width="45" height="1" fill="#eef4fa"/><rect x="0" y="524" width="45" height="1" fill="#eef4fa"/><rect x="0" y="533" width="45" height="1" fill="#eef4fa"/><rect x="0" y="542" width="45" height="1" fill="#eef4fa"/><rect x="0" y="551" width="45" height="1" fill="#eef4fa"/><rect x="0" y="559" width="45" height="1" fill="#eef4fa"/><rect x="0" y="568" width="45" height="1" fill="#eef4fa"/><rect x="0" y="577" width="45" height="1" fill="#eef4fa"/><rect x="0" y="586" width="45" height="1" fill="#eef4fa"/><rect x="0" y="594" width="45" height="1" fill="#eef4fa"/><rect x="0" y="603" width="45" height="1" fill="#eef4fa"/><rect x="0" y="612" width="45" height="1" fill="#eef4fa"/><rect x="0" y="621" width="45" height="1" fill="#eef4fa"/><rect x="0" y="629" width="45" height="1" fill="#eef4fa"/><rect x="0" y="638" width="45" height="1" fill="#eef4fa"/><rect x="0" y="647" width="45" height="1" fill="#eef4fa"/><rect x="0" y="656" width="45" height="1" fill="#eef4fa"/><rect x="0" y="664" width="45" height="1" fill="#eef4fa"/><rect x="0" y="673" width="45" height="1" fill="#eef4fa"/><rect x="0" y="682" width="45" height="1" fill="#eef4fa"/><rect x="0" y="691" width="45" height="1" fill="#eef4fa"/><rect x="0" y="699" width="45" height="1" fill="#eef4fa"/><rect x="0" y="708" width="45" height="1" fill="#eef4fa"/><rect x="0" y="717" width="45" height="1" fill="#eef4fa"/><rect x="0" y="726" width="45" height="1" fill="#eef4fa"/><rect x="0" y="734" width="45" height="1" fill="#eef4fa"/><rect x="0" y="743" width="45" height="1" fill="#eef4fa"/><rect x="0" y="752" width="45" height="1" fill="#eef4fa"/><rect x="0" y="761" width="45" height="1" fill="#eef4fa"/><rect x="0" y="769" width="45" height="1" fill="#eef4fa"/><rect x="0" y="778" width="45" height="1" fill="#eef4fa"/><rect x="0" y="787" width="45" height="1" fill="#eef4fa"/><rect x="0" y="796" width="45" height="1" fill="#eef4fa"/><rect x="0" y="804" width="45" height="1" fill="#eef4fa"/><rect x="0" y="813" width="45" height="1" fill="#eef4fa"/><rect x="0" y="822" width="45" height="1" fill="#eef4fa"/><rect x="0" y="831" width="45" height="1" fill="#eef4fa"/><rect x="0" y="839" width="45" height="1" fill="#eef4fa"/><rect x="0" y="848" width="45" height="1" fill="#eef4fa"/><rect x="0" y="857" width="45" height="1" fill="#eef4fa"/><rect x="0" y="866" width="45" height="1" fill="#eef4fa"/><rect x="0" y="874" width="45" height="1" fill="#eef4fa"/><rect x="0" y="883" width="45" height="1" fill="#eef4fa"/><rect x="0" y="892" width="45" height="1" fill="#eef4fa"/><rect x="0" y="901" width="45" height="1" fill="#eef4fa"/><rect x="0" y="909" width="45" height="1" fill="#eef4fa"/><rect x="0" y="918" width="45" height="1" fill="#eef4fa"/><rect x="0" y="927" width="45" height="1" fill="#eef4fa"/><rect x="0" y="936" width="45" height="1" fill="#eef4fa"/><rect x="0" y="944" width="45" height="1" fill="#eef4fa"/><rect x="0" y="953" width="45" height="1" fill="#eef4fa"/><rect x="0" y="962" width="45" height="1" fill="#eef4fa"/><rect x="0" y="971" width="45" height="1" fill="#eef4fa"/><rect x="0" y="0" width="9" height="139" fill="#024b96"/><rect x="0" y="0" width="1" height="139" fill="#f4f7fb"/><rect x="9" y="0" width="1" height="139" fill="#f4f7fb"/><rect x="0" y="131" width="10" height="1" fill="#f4f7fb"/><rect x="0" y="122" width="10" height="1" fill="#f4f7fb"/><rect x="0" y="113" width="10" height="1" fill="#f4f7fb"/><rect x="0" y="104" width="10" height="1" fill="#f4f7fb"/><rect x="0" y="96" width="10" height="1" fill="#f4f7fb"/><rect x="0" y="87" width="10" height="1" fill="#f4f7fb"/><rect x="0" y="78" width="10" height="1" fill="#f4f7fb"/><rect x="0" y="69" width="10" height="1" fill="#f4f7fb"/><rect x="0" y="61" width="10" height="1" fill="#f4f7fb"/><rect x="0" y="52" width="10" height="1" fill="#f4f7fb"/><rect x="0" y="43" width="10" height="1" fill="#f4f7fb"/><rect x="0" y="34" width="10" height="1" fill="#f4f7fb"/><rect x="0" y="26" width="10" height="1" fill="#f4f7fb"/><rect x="0" y="17" width="10" height="1" fill="#f4f7fb"/><rect x="0" y="8" width="10" height="1" fill="#f4f7fb"/><rect x="0" y="-1" width="10" height="1" fill="#f4f7fb"/><rect x="0" y="-9" width="10" height="1" fill="#f4f7fb"/><rect x="10" y="0" width="34" height="139" fill="#fcfcfc"/><rect x="10" y="35" width="34" height="8" fill="#024b96"/><rect x="9" y="35" width="1" height="8" fill="#fcfcfc"/><rect x="17" y="35" width="1" height="8" fill="#fcfcfc"/><rect x="26" y="35" width="1" height="8" fill="#fcfcfc"/><rect x="35" y="35" width="1" height="8" fill="#fcfcfc"/></svg>
<div style="position:absolute;left:1546.5px;top:82.5px;height:22px;line-height:22px;white-space:nowrap;color:#fff;font-size:22px;-webkit-text-stroke:0.7px #fff;">CENTRÁLNÍ</div>
<div style="position:absolute;left:1546.5px;top:105.7px;height:22px;line-height:22px;white-space:nowrap;color:#fff;font-size:22px;-webkit-text-stroke:0.7px #fff;">MOZEK</div>
<div style="position:absolute;left:1546.5px;top:128.9px;height:22px;line-height:22px;white-space:nowrap;color:#fff;font-size:22px;-webkit-text-stroke:0.7px #fff;">FIRMY</div>
<svg width="0" height="0" style="position:absolute"><defs><linearGradient id="refl" x1="0" y1="0" x2="0" y2="1"><stop offset="0" stop-color="#a9bedf" stop-opacity="0.38"/><stop offset="1" stop-color="#a9bedf" stop-opacity="0"/></linearGradient></defs></svg>
<svg style="left:412px;top:784px;" width="70" height="72"><g transform="rotate(22 17.25 13.5)"><rect x="14.5" y="6" width="5.5" height="15" rx="0.6" fill="#2bdc2b"/><circle cx="17.25" cy="18" r="1.1" fill="#1f4f8f"/></g><g><rect x="22.5" y="6" width="5.3" height="15" rx="0.6" fill="#e2e2e2"/><rect x="23.5" y="7" width="1.3" height="5.25" fill="#fafafa" opacity="0.9"/><circle cx="25.15" cy="18" r="1.1" fill="#1f4f8f"/></g><g><rect x="28.2" y="6" width="5.3" height="15" rx="0.6" fill="#c9c9c9"/></g><rect x="41.2" y="16.2" width="15.2" height="4.8" rx="0.6" fill="#e6e6e6"/><circle cx="44" cy="18.6" r="1.1" fill="#1f4f8f"/><rect x="49" y="17" width="6" height="1.2" fill="#fff"/><rect x="8.8" y="21.5" width="52.2" height="1.6" fill="#c4c0bc"/><g><rect x="16.6" y="24.7" width="4.9" height="15.5" rx="0.6" fill="#a9a9a9"/><rect x="17.6" y="25.7" width="1.3" height="5.425" fill="#fafafa" opacity="0.9"/><circle cx="19.05" cy="37.2" r="1.1" fill="#1f4f8f"/></g><rect x="22.9" y="24.7" width="6" height="15.5" fill="#2bdc2b"/><rect x="24" y="24.7" width="3.8" height="15.5" fill="#d8d8d8"/><rect x="29.6" y="29.6" width="14.8" height="4.6" fill="#e4e4e4"/><circle cx="32" cy="31.9" r="1.1" fill="#1f4f8f"/><rect x="37" y="30.3" width="6" height="1.2" fill="#fff"/><rect x="29.6" y="35.2" width="14.8" height="4.6" fill="#777"/><circle cx="32" cy="37.5" r="1.1" fill="#1f4f8f"/><rect x="37" y="36" width="6" height="1.2" fill="#fff"/><g><rect x="51.1" y="24.7" width="4.9" height="15.5" rx="0.6" fill="#2bdc2b"/><circle cx="53.550000000000004" cy="37.2" r="1.1" fill="#1f4f8f"/></g><rect x="8.8" y="40.5" width="52.2" height="1.6" fill="#c4c0bc"/><g><rect x="13.4" y="43.3" width="5.3" height="15.5" rx="0.6" fill="#e0e0e0"/><rect x="14.4" y="44.3" width="1.3" height="5.425" fill="#fafafa" opacity="0.9"/><circle cx="16.05" cy="55.8" r="1.1" fill="#1f4f8f"/></g><g><rect x="19" y="43.3" width="5" height="15.5" rx="0.6" fill="#7a7a7a"/><rect x="20" y="44.3" width="1.3" height="5.425" fill="#fafafa" opacity="0.9"/><circle cx="21.5" cy="55.8" r="1.1" fill="#1f4f8f"/></g><g><rect x="27.1" y="43.3" width="5.7" height="15.5" rx="0.6" fill="#cfcfcf"/><rect x="28.1" y="44.3" width="1.3" height="5.425" fill="#fafafa" opacity="0.9"/></g><g transform="rotate(25 43.25 51.05)"><rect x="40.5" y="43.3" width="5.5" height="15.5" rx="0.6" fill="#2bdc2b"/><circle cx="43.25" cy="55.8" r="1.1" fill="#1f4f8f"/></g><g><rect x="48.3" y="43.3" width="4.9" height="15.5" rx="0.6" fill="#e0e0e0"/><rect x="49.3" y="44.3" width="1.3" height="5.425" fill="#fafafa" opacity="0.9"/><circle cx="50.75" cy="55.8" r="1.1" fill="#1f4f8f"/></g><g><rect x="53.6" y="43.3" width="5.2" height="15.5" rx="0.6" fill="#a9a9a9"/><rect x="54.6" y="44.3" width="1.3" height="5.425" fill="#fafafa" opacity="0.9"/><circle cx="56.2" cy="55.8" r="1.1" fill="#1f4f8f"/></g><rect x="13.4" y="59.2" width="11" height="10" fill="url(#refl)"/><rect x="27.1" y="59.2" width="5.7" height="10" fill="url(#refl)"/><rect x="40" y="59.2" width="7" height="10" fill="url(#refl)"/><rect x="48.3" y="59.2" width="10.5" height="10" fill="url(#refl)"/></svg>
<div style="position:absolute;left:377px;top:860px;height:13px;line-height:13px;width:140px;text-align:center;white-space:nowrap;color:#fff;font-size:10.8px;">Seznam všech</div>
<div style="position:absolute;left:377px;top:873px;height:13px;line-height:13px;width:140px;text-align:center;white-space:nowrap;color:#fff;font-size:10.8px;">vydaných faktur</div>
<svg style="left:552px;top:788px;" width="70" height="72"><g transform="rotate(22 17.25 13.5)"><rect x="14.5" y="6" width="5.5" height="15" rx="0.6" fill="#1ea0f5"/><circle cx="17.25" cy="18" r="1.1" fill="#1f4f8f"/></g><g><rect x="22.5" y="6" width="5.3" height="15" rx="0.6" fill="#e2e2e2"/><rect x="23.5" y="7" width="1.3" height="5.25" fill="#fafafa" opacity="0.9"/><circle cx="25.15" cy="18" r="1.1" fill="#1f4f8f"/></g><g><rect x="28.2" y="6" width="5.3" height="15" rx="0.6" fill="#c9c9c9"/></g><rect x="41.2" y="16.2" width="15.2" height="4.8" rx="0.6" fill="#e6e6e6"/><circle cx="44" cy="18.6" r="1.1" fill="#1f4f8f"/><rect x="49" y="17" width="6" height="1.2" fill="#fff"/><rect x="8.8" y="21.5" width="52.2" height="1.6" fill="#c4c0bc"/><g><rect x="16.6" y="24.7" width="4.9" height="15.5" rx="0.6" fill="#a9a9a9"/><rect x="17.6" y="25.7" width="1.3" height="5.425" fill="#fafafa" opacity="0.9"/><circle cx="19.05" cy="37.2" r="1.1" fill="#1f4f8f"/></g><rect x="22.9" y="24.7" width="6" height="15.5" fill="#1ea0f5"/><rect x="24" y="24.7" width="3.8" height="15.5" fill="#d8d8d8"/><rect x="29.6" y="29.6" width="14.8" height="4.6" fill="#e4e4e4"/><circle cx="32" cy="31.9" r="1.1" fill="#1f4f8f"/><rect x="37" y="30.3" width="6" height="1.2" fill="#fff"/><rect x="29.6" y="35.2" width="14.8" height="4.6" fill="#777"/><circle cx="32" cy="37.5" r="1.1" fill="#1f4f8f"/><rect x="37" y="36" width="6" height="1.2" fill="#fff"/><g><rect x="51.1" y="24.7" width="4.9" height="15.5" rx="0.6" fill="#1ea0f5"/><circle cx="53.550000000000004" cy="37.2" r="1.1" fill="#1f4f8f"/></g><rect x="8.8" y="40.5" width="52.2" height="1.6" fill="#c4c0bc"/><g><rect x="13.4" y="43.3" width="5.3" height="15.5" rx="0.6" fill="#e0e0e0"/><rect x="14.4" y="44.3" width="1.3" height="5.425" fill="#fafafa" opacity="0.9"/><circle cx="16.05" cy="55.8" r="1.1" fill="#1f4f8f"/></g><g><rect x="19" y="43.3" width="5" height="15.5" rx="0.6" fill="#7a7a7a"/><rect x="20" y="44.3" width="1.3" height="5.425" fill="#fafafa" opacity="0.9"/><circle cx="21.5" cy="55.8" r="1.1" fill="#1f4f8f"/></g><g><rect x="27.1" y="43.3" width="5.7" height="15.5" rx="0.6" fill="#cfcfcf"/><rect x="28.1" y="44.3" width="1.3" height="5.425" fill="#fafafa" opacity="0.9"/></g><g transform="rotate(25 43.25 51.05)"><rect x="40.5" y="43.3" width="5.5" height="15.5" rx="0.6" fill="#1ea0f5"/><circle cx="43.25" cy="55.8" r="1.1" fill="#1f4f8f"/></g><g><rect x="48.3" y="43.3" width="4.9" height="15.5" rx="0.6" fill="#e0e0e0"/><rect x="49.3" y="44.3" width="1.3" height="5.425" fill="#fafafa" opacity="0.9"/><circle cx="50.75" cy="55.8" r="1.1" fill="#1f4f8f"/></g><g><rect x="53.6" y="43.3" width="5.2" height="15.5" rx="0.6" fill="#a9a9a9"/><rect x="54.6" y="44.3" width="1.3" height="5.425" fill="#fafafa" opacity="0.9"/><circle cx="56.2" cy="55.8" r="1.1" fill="#1f4f8f"/></g><rect x="13.4" y="59.2" width="11" height="10" fill="url(#refl)"/><rect x="27.1" y="59.2" width="5.7" height="10" fill="url(#refl)"/><rect x="40" y="59.2" width="7" height="10" fill="url(#refl)"/><rect x="48.3" y="59.2" width="10.5" height="10" fill="url(#refl)"/></svg>
<div style="position:absolute;left:517px;top:863px;height:13px;line-height:13px;width:140px;text-align:center;white-space:nowrap;color:#fff;font-size:10.8px;">Seznam přijatých</div>
<div style="position:absolute;left:517px;top:876px;height:13px;line-height:13px;width:140px;text-align:center;white-space:nowrap;color:#fff;font-size:10.8px;">faktur</div>
<svg style="left:694px;top:801px;" width="70" height="52"><ellipse cx="18" cy="44" rx="15" ry="5" fill="#0f3a70" opacity="0.55"/><ellipse cx="50" cy="44" rx="15" ry="5" fill="#0f3a70" opacity="0.55"/><path d="M2 38 Q3 30 8 22 L34 40 L60 22 Q65 30 66 38 Q50 33 34 45 Q18 33 2 38Z" fill="#2d9df0"/><path d="M12 3.5 Q22 1 33.5 8.5 L33.5 42 Q20 32 4 36 Z" fill="#a9a9a9"/><path d="M12.5 3 Q22 1 33.5 8.5 L33.5 39 Q20 30 5 33 Z" fill="#d0d0d0"/><path d="M55 3.5 Q45 1 34 8.5 L34 42 Q47 32 63 36 Z" fill="#a9a9a9"/><path d="M54.5 3 Q45 1 34 8.5 L34 39 Q47 30 62 33 Z" fill="#c9c9c9"/><path d="M33.8 9 V41" stroke="#7a7a7a" stroke-width="1.3"/><path d="M11 14.5 q2 -1.5 4 0 t4 0 t4 0 t4 0 M10 21 q2 -1.5 4 0 t4 0" stroke="#666" stroke-width="1.6" fill="none"/><path d="M38 14.5 q2 -1.5 4 0 t4 0 M39 21 q2 -1.5 4 0 t4 0" stroke="#666" stroke-width="1.6" fill="none"/><rect x="50" y="9" width="7" height="10" rx="2" fill="#a4a4a4"/><rect x="48" y="26" width="10" height="4" rx="2" fill="#aaa"/><path d="M5 29 V33 H9" stroke="#fff" stroke-width="1.2" fill="none"/></svg>
<div style="position:absolute;left:656px;top:861px;height:13px;line-height:13px;width:140px;text-align:center;white-space:nowrap;color:#fff;font-size:10.8px;">Účetní deník</div>
<svg style="left:408px;top:936px;" width="72" height="72"><defs><linearGradient id="tileg" x1="0" y1="0" x2="0" y2="1"><stop offset="0" stop-color="#fafafa"/><stop offset="1" stop-color="#d8d8d8"/></linearGradient></defs><rect x="6" y="26.5" width="35" height="31" rx="6" fill="url(#tileg)" stroke="#b9b9b9" stroke-width="2.6"/><rect x="34" y="18" width="33" height="31" rx="6" fill="url(#tileg)" stroke="#aaaaaa" stroke-width="2.6" transform="rotate(10 50 33)"/><path d="M12 48 l4 -8 l4 8 l4 -8 l4 8" stroke="#555" stroke-width="2" fill="none"/><path d="M42 40 l4 -8 l4 8 l4 -8 l4 8" stroke="#555" stroke-width="2" fill="none"/><rect x="12.5" y="7" width="36" height="29" rx="6" fill="#f6f6f6" stroke="#1a9cf0" stroke-width="3.2" transform="rotate(6 30 21)"/><path d="M20 18 l3.5 -7 l3.5 7 l3.5 -7 l3.5 7 M24 28 l3.5 -7 l3.5 7 l3.5 -7 l3.5 7" stroke="#555" stroke-width="2" fill="none"/><rect x="8" y="59" width="58" height="10" fill="url(#refl)"/></svg>
<div style="position:absolute;left:373px;top:1011px;height:13px;line-height:13px;width:140px;text-align:center;white-space:nowrap;color:#fff;font-size:10.8px;">Hromadná tvorba</div>
<div style="position:absolute;left:373px;top:1024px;height:13px;line-height:13px;width:140px;text-align:center;white-space:nowrap;color:#fff;font-size:10.8px;">faktur</div>
<svg style="left:546px;top:932px;" width="70" height="58"><rect x="26" y="4" width="31" height="36" rx="2" fill="#e4e4e4" stroke="#8f8f8f" stroke-width="3"/><path d="M31 12 l2.5 -3 l2.5 3 l2.5 -3 l2.5 3 l2.5 -3 M31 21 l2.5 -3 l2.5 3 l2.5 -3 l2.5 3 M31 30 l2.5 -3 l2.5 3 l2.5 -3 l2.5 3" stroke="#555" stroke-width="1.6" fill="none"/><path d="M38 30 L58 6 Q62 2 65 6 Q67 9 64 12 L44 35 L36 37Z" fill="#2d9df0"/><path d="M46 24 L58 10" stroke="#fff" stroke-width="2"/><path d="M40 32 L46 25 L50 29 L44 35Z" fill="#555"/><circle cx="16" cy="18" r="6.5" fill="#666"/><circle cx="14" cy="16" r="2.5" fill="#8a8a8a"/><path d="M2 44 Q2 25 16 25 Q30 25 30 44Z" fill="#666"/><path d="M6 44 Q6 29 9 27 L9 44Z" fill="#fff"/><path d="M16 27 L12.5 36 L16 42 L19.5 36Z" fill="#2d9df0"/><rect x="23" y="30" width="5" height="12" rx="2" fill="#333"/><rect x="2" y="45" width="62" height="10" fill="url(#refl)"/></svg>
<div style="position:absolute;left:510px;top:993px;height:13px;line-height:13px;width:140px;text-align:center;white-space:nowrap;color:#fff;font-size:10.8px;">Neuhrazené</div>
<div style="position:absolute;left:510px;top:1006px;height:13px;line-height:13px;width:140px;text-align:center;white-space:nowrap;color:#fff;font-size:10.8px;">pohledávky</div>
<svg style="left:696px;top:936px;" width="66" height="54"><rect x="1" y="1" width="64" height="40" rx="4" fill="#6f6f6f"/><path d="M5 1 H40 L27 41 H5 Q1 41 1 37 V5 Q1 1 5 1Z" fill="#ee1122"/><path d="M40 1 L27 41" stroke="#ff6a80" stroke-width="2"/><path d="M3 12 V5 Q3 3 6 3 H43" stroke="#fff" stroke-width="1.8" fill="none"/><rect x="44" y="5" width="17" height="16" rx="3" fill="#d4d4d4"/><circle cx="50" cy="10" r="3" fill="#cc0c1c"/><circle cx="55" cy="10" r="3" fill="#ff3344"/><path d="M8 25.5 H62" stroke="#bbb" stroke-width="2.4" stroke-dasharray="5 2"/><rect x="31" y="32" width="31" height="7" rx="3" fill="#555"/><rect x="2" y="42" width="62" height="10" fill="url(#refl)"/></svg>
<div style="position:absolute;left:658px;top:993px;height:13px;line-height:13px;width:140px;text-align:center;white-space:nowrap;color:#fff;font-size:10.8px;">Bankovní účty vlastní</div>
<div style="position:absolute;left:658px;top:1006px;height:13px;line-height:13px;width:140px;text-align:center;white-space:nowrap;color:#fff;font-size:10.8px;">organizace</div>
<div style="position:absolute;left:390px;top:75px;width:837px;height:559px;background:#fff;"></div>
<div style="position:absolute;left:390px;top:75px;width:837px;height:27px;background:#e9e9e9;border-bottom:1px solid #d3e2f1;"></div>
<svg style="left:397px;top:81px;" width="16" height="17"><path d="M1 1 L14.5 8 L1 15.5Z" fill="#fff"/><path d="M3 13.5 L12.5 8.5" stroke="#9a9a9a" stroke-width="1.4"/><path d="M1.5 1 L1.5 4.5 M1.5 1 L3.5 2" stroke="#c0c0c0"/></svg>
<div style="position:absolute;left:416px;top:76px;height:26px;line-height:26px;white-space:nowrap;font-weight:bold;font-size:11.35px;color:#3c3c3c;">Podklady pro DPH</div>
<div style="position:absolute;left:1129px;top:76px;height:26px;line-height:26px;white-space:nowrap;font-weight:bold;font-size:11.35px;color:#3c3c3c;">26</div>
<svg style="left:1154px;top:85px;" width="62" height="12"><path d="M0 5.5 H10" stroke="#111" stroke-width="1.3"/><rect x="25" y="0.6" width="9.6" height="9.6" fill="none" stroke="#111" stroke-width="1.3"/><path d="M50 0.5 L60 10.5 M60 0.5 L50 10.5" stroke="#111" stroke-width="2.2"/></svg>
<div style="position:absolute;left:402px;top:119px;height:14px;line-height:14px;white-space:nowrap;font-size:10.6px;color:#111;">Typ přiznání</div>
<div style="position:absolute;left:475px;top:112px;width:118px;height:19px;line-height:17px;background:#dde9fb;border:1px solid #c6d8f3;text-align:left;padding:0 2px;white-space:nowrap;overflow:hidden;font-size:10.6px;color:#111;">řádné</div>
<div style="position:absolute;left:623px;top:112px;width:70px;height:19px;line-height:17px;background:#dde9fb;border:1px solid #c6d8f3;text-align:left;padding:0 2px;white-space:nowrap;overflow:hidden;font-size:10.6px;color:#111;">01.06.2016</div>
<div style="position:absolute;left:703px;top:114px;height:14px;line-height:14px;white-space:nowrap;font-size:10.6px;color:#111;">&lt;---&gt;</div>
<div style="position:absolute;left:743px;top:112px;width:70px;height:19px;line-height:17px;background:#dde9fb;border:1px solid #c6d8f3;text-align:left;padding:0 2px;white-space:nowrap;overflow:hidden;font-size:10.6px;color:#111;">30.06.2016</div>
<div style="position:absolute;left:905px;top:119px;height:14px;line-height:14px;white-space:nowrap;font-size:10.6px;color:#111;">Počet příloh / listů</div>
<div style="position:absolute;left:1000px;top:112px;width:30px;height:19px;line-height:17px;background:#fff;border:1px solid #c6d8f3;text-align:left;padding:0 2px;white-space:nowrap;overflow:hidden;font-size:10.6px;color:#111;"></div>
<div style="position:absolute;left:1034px;top:111px;height:14px;line-height:14px;white-space:nowrap;font-size:11px;color:#111;">/</div>
<div style="position:absolute;left:1044px;top:112px;width:30px;height:19px;line-height:17px;background:#fff;border:1px solid #c6d8f3;text-align:left;padding:0 2px;white-space:nowrap;overflow:hidden;font-size:10.6px;color:#111;"></div>
<div style="position:absolute;left:403px;top:144px;width:671px;height:428px;border:1px solid #c6d8f3;background:#f7fafd;"></div>
<div style="position:absolute;left:404px;top:145px;width:652px;height:36px;background:linear-gradient(#fdfeff,#e8eef7);"></div>
<div style="position:absolute;left:404px;top:145px;width:143px;height:36px;padding:3px 3px 0 3px;line-height:13px;white-space:pre;overflow:hidden;font-size:10.6px;color:#152238;">Evidenční číslo dokladu</div>
<div style="position:absolute;left:546px;top:145px;width:132px;height:36px;padding:3px 3px 0 3px;line-height:13px;white-space:pre;overflow:hidden;font-size:10.6px;color:#152238;">Datum uplatnění zd. plnění</div>
<div style="position:absolute;left:546px;top:145px;width:1px;height:36px;background:#dbe6f3"></div>
<div style="position:absolute;left:678px;top:145px;width:169px;height:36px;padding:3px 3px 0 3px;line-height:13px;white-space:pre;overflow:hidden;font-size:10.6px;color:#152238;">Obchodní partner</div>
<div style="position:absolute;left:678px;top:145px;width:1px;height:36px;background:#dbe6f3"></div>
<div style="position:absolute;left:847px;top:145px;width:95px;height:36px;padding:3px 3px 0 3px;line-height:13px;white-space:pre;overflow:hidden;font-size:10.6px;color:#152238;">DIČ</div>
<div style="position:absolute;left:847px;top:145px;width:1px;height:36px;background:#dbe6f3"></div>
<div style="position:absolute;left:942px;top:145px;width:71px;height:36px;padding:3px 3px 0 3px;line-height:13px;white-space:pre;overflow:hidden;font-size:10.6px;color:#152238;">Sazba DPH %</div>
<div style="position:absolute;left:942px;top:145px;width:1px;height:36px;background:#dbe6f3"></div>
<div style="position:absolute;left:1013px;top:145px;width:43px;height:36px;padding:3px 3px 0 3px;line-height:13px;white-space:pre;overflow:hidden;font-size:10.6px;color:#152238;">Základ
daně</div>
<div style="position:absolute;left:1013px;top:145px;width:1px;height:36px;background:#dbe6f3"></div>
<div style="position:absolute;left:404px;top:181px;width:142px;height:18px;line-height:18px;background:#004671;padding-left:2px;white-space:pre;overflow:hidden;font-size:10.6px;color:#fff;">OZ-DPH-2016-510-000006</div>
<div style="position:absolute;left:547px;top:181px;width:131px;height:18px;line-height:18px;background:#004671;padding-left:2px;white-space:pre;overflow:hidden;font-size:10.6px;color:#fff;">23.06.2016</div>
<div style="position:absolute;left:679px;top:181px;width:168px;height:18px;line-height:18px;background:#004671;padding-left:2px;white-space:pre;overflow:hidden;font-size:10.6px;color:#fff;">Finanční úřad Brno - město</div>
<div style="position:absolute;left:848px;top:181px;width:94px;height:18px;line-height:18px;background:#004671;padding-left:2px;white-space:pre;overflow:hidden;font-size:10.6px;color:#fff;">CZ00282979</div>
<div style="position:absolute;left:943px;top:181px;width:70px;height:18px;line-height:18px;background:#004671;padding-left:2px;white-space:pre;overflow:hidden;font-size:10.6px;color:#fff;">0</div>
<div style="position:absolute;left:1014px;top:181px;width:42px;height:18px;background:#004671;overflow:hidden;"><div style="position:absolute;right:-18px;top:0;line-height:18px;white-space:nowrap;font-size:10.6px;color:#fff;">190 533,88</div></div>
<div style="position:absolute;left:404px;top:199px;width:142px;height:18px;line-height:18px;background:#c9dcf9;padding-left:2px;white-space:pre;overflow:hidden;font-size:10.6px;color:#111;">FV-2016-100-000029</div>
<div style="position:absolute;left:547px;top:199px;width:131px;height:18px;line-height:18px;background:#c9dcf9;padding-left:2px;white-space:pre;overflow:hidden;font-size:10.6px;color:#111;">13.06.2016</div>
<div style="position:absolute;left:679px;top:199px;width:168px;height:18px;line-height:18px;background:#c9dcf9;padding-left:2px;white-space:pre;overflow:hidden;font-size:10.6px;color:#111;">M E R I T Z  Service, spol. s r.o.</div>
<div style="position:absolute;left:848px;top:199px;width:94px;height:18px;line-height:18px;background:#c9dcf9;padding-left:2px;white-space:pre;overflow:hidden;font-size:10.6px;color:#111;">CZ13324233</div>
<div style="position:absolute;left:943px;top:199px;width:70px;height:18px;line-height:18px;background:#c9dcf9;padding-left:2px;white-space:pre;overflow:hidden;font-size:10.6px;color:#111;">21</div>
<div style="position:absolute;left:1014px;top:199px;width:42px;height:18px;background:#c9dcf9;overflow:hidden;"><div style="position:absolute;right:-18px;top:0;line-height:18px;white-space:nowrap;font-size:10.6px;color:#111;">76 393,39</div></div>
<div style="position:absolute;left:404px;top:217px;width:142px;height:18px;line-height:18px;background:#e1ecfc;padding-left:2px;white-space:pre;overflow:hidden;font-size:10.6px;color:#111;">FV-2016-100-000030</div>
<div style="position:absolute;left:547px;top:217px;width:131px;height:18px;line-height:18px;background:#e1ecfc;padding-left:2px;white-space:pre;overflow:hidden;font-size:10.6px;color:#111;">20.06.2016</div>
<div style="position:absolute;left:679px;top:217px;width:168px;height:18px;line-height:18px;background:#e1ecfc;padding-left:2px;white-space:pre;overflow:hidden;font-size:10.6px;color:#111;">Velom, spol. s r.o.</div>
<div style="position:absolute;left:848px;top:217px;width:94px;height:18px;line-height:18px;background:#e1ecfc;padding-left:2px;white-space:pre;overflow:hidden;font-size:10.6px;color:#111;">CZ75454560</div>
<div style="position:absolute;left:943px;top:217px;width:70px;height:18px;line-height:18px;background:#e1ecfc;padding-left:2px;white-space:pre;overflow:hidden;font-size:10.6px;color:#111;">21</div>
<div style="position:absolute;left:1014px;top:217px;width:42px;height:18px;background:#e1ecfc;overflow:hidden;"><div style="position:absolute;right:-18px;top:0;line-height:18px;white-space:nowrap;font-size:10.6px;color:#111;">59 230,00</div></div>
<div style="position:absolute;left:404px;top:235px;width:142px;height:18px;line-height:18px;background:#c9dcf9;padding-left:2px;white-space:pre;overflow:hidden;font-size:10.6px;color:#111;">FV-2016-100-000031</div>
<div style="position:absolute;left:547px;top:235px;width:131px;height:18px;line-height:18px;background:#c9dcf9;padding-left:2px;white-space:pre;overflow:hidden;font-size:10.6px;color:#111;">27.06.2016</div>
<div style="position:absolute;left:679px;top:235px;width:168px;height:18px;line-height:18px;background:#c9dcf9;padding-left:2px;white-space:pre;overflow:hidden;font-size:10.6px;color:#111;">Velkoobchod Bikezone, spol. s r.o.</div>
<div style="position:absolute;left:848px;top:235px;width:94px;height:18px;line-height:18px;background:#c9dcf9;padding-left:2px;white-space:pre;overflow:hidden;font-size:10.6px;color:#111;">CZ64634000</div>
<div style="position:absolute;left:943px;top:235px;width:70px;height:18px;line-height:18px;background:#c9dcf9;padding-left:2px;white-space:pre;overflow:hidden;font-size:10.6px;color:#111;">21</div>
<div style="position:absolute;left:1014px;top:235px;width:42px;height:18px;background:#c9dcf9;overflow:hidden;"><div style="position:absolute;right:-18px;top:0;line-height:18px;white-space:nowrap;font-size:10.6px;color:#111;">1 003 031,00</div></div>
<div style="position:absolute;left:404px;top:253px;width:142px;height:18px;line-height:18px;background:#e1ecfc;padding-left:2px;white-space:pre;overflow:hidden;font-size:10.6px;color:#111;">FV-2016-100-000032</div>
<div style="position:absolute;left:547px;top:253px;width:131px;height:18px;line-height:18px;background:#e1ecfc;padding-left:2px;white-space:pre;overflow:hidden;font-size:10.6px;color:#111;">29.06.2016</div>
<div style="position:absolute;left:679px;top:253px;width:168px;height:18px;line-height:18px;background:#e1ecfc;padding-left:2px;white-space:pre;overflow:hidden;font-size:10.6px;color:#111;">CYKLO doplňky, spol. s r.o.</div>
<div style="position:absolute;left:848px;top:253px;width:94px;height:18px;line-height:18px;background:#e1ecfc;padding-left:2px;white-space:pre;overflow:hidden;font-size:10.6px;color:#111;">CZ09845671</div>
<div style="position:absolute;left:943px;top:253px;width:70px;height:18px;line-height:18px;background:#e1ecfc;padding-left:2px;white-space:pre;overflow:hidden;font-size:10.6px;color:#111;">21</div>
<div style="position:absolute;left:1014px;top:253px;width:42px;height:18px;background:#e1ecfc;overflow:hidden;"><div style="position:absolute;right:-18px;top:0;line-height:18px;white-space:nowrap;font-size:10.6px;color:#111;">100 700,00</div></div>
<div style="position:absolute;left:404px;top:271px;width:142px;height:18px;line-height:18px;background:#c9dcf9;padding-left:2px;white-space:pre;overflow:hidden;font-size:10.6px;color:#111;">FV-2016-100-000033</div>
<div style="position:absolute;left:547px;top:271px;width:131px;height:18px;line-height:18px;background:#c9dcf9;padding-left:2px;white-space:pre;overflow:hidden;font-size:10.6px;color:#111;">30.06.2016</div>
<div style="position:absolute;left:679px;top:271px;width:168px;height:18px;line-height:18px;background:#c9dcf9;padding-left:2px;white-space:pre;overflow:hidden;font-size:10.6px;color:#111;">TESKOL, s.r.o.</div>
<div style="position:absolute;left:848px;top:271px;width:94px;height:18px;line-height:18px;background:#c9dcf9;padding-left:2px;white-space:pre;overflow:hidden;font-size:10.6px;color:#111;">CZ91230897</div>
<div style="position:absolute;left:943px;top:271px;width:70px;height:18px;line-height:18px;background:#c9dcf9;padding-left:2px;white-space:pre;overflow:hidden;font-size:10.6px;color:#111;">21</div>
<div style="position:absolute;left:1014px;top:271px;width:42px;height:18px;background:#c9dcf9;overflow:hidden;"><div style="position:absolute;right:-18px;top:0;line-height:18px;white-space:nowrap;font-size:10.6px;color:#111;">59 742,00</div></div>
<div style="position:absolute;left:404px;top:289px;width:142px;height:18px;line-height:18px;background:#e1ecfc;padding-left:2px;white-space:pre;overflow:hidden;font-size:10.6px;color:#111;">FV-S-2016-120-000001</div>
<div style="position:absolute;left:547px;top:289px;width:131px;height:18px;line-height:18px;background:#e1ecfc;padding-left:2px;white-space:pre;overflow:hidden;font-size:10.6px;color:#111;">30.06.2016</div>
<div style="position:absolute;left:679px;top:289px;width:168px;height:18px;line-height:18px;background:#e1ecfc;padding-left:2px;white-space:pre;overflow:hidden;font-size:10.6px;color:#111;">TESKOL, s.r.o.</div>
<div style="position:absolute;left:848px;top:289px;width:94px;height:18px;line-height:18px;background:#e1ecfc;padding-left:2px;white-space:pre;overflow:hidden;font-size:10.6px;color:#111;">CZ91230897</div>
<div style="position:absolute;left:943px;top:289px;width:70px;height:18px;line-height:18px;background:#e1ecfc;padding-left:2px;white-space:pre;overflow:hidden;font-size:10.6px;color:#111;">21</div>
<div style="position:absolute;left:1014px;top:289px;width:42px;height:18px;background:#e1ecfc;overflow:hidden;"><div style="position:absolute;right:-18px;top:0;line-height:18px;white-space:nowrap;font-size:10.6px;color:#111;">2 066,00</div></div>
<div style="position:absolute;left:404px;top:307px;width:142px;height:18px;line-height:18px;background:#c9dcf9;padding-left:2px;white-space:pre;overflow:hidden;font-size:10.6px;color:#111;">FV-Z-2016-110-000007</div>
<div style="position:absolute;left:547px;top:307px;width:131px;height:18px;line-height:18px;background:#c9dcf9;padding-left:2px;white-space:pre;overflow:hidden;font-size:10.6px;color:#111;">22.06.2016</div>
<div style="position:absolute;left:679px;top:307px;width:168px;height:18px;line-height:18px;background:#c9dcf9;padding-left:2px;white-space:pre;overflow:hidden;font-size:10.6px;color:#111;">Gesipa Vorstellung, GmbH</div>
<div style="position:absolute;left:848px;top:307px;width:94px;height:18px;line-height:18px;background:#c9dcf9;padding-left:2px;white-space:pre;overflow:hidden;font-size:10.6px;color:#111;">DE811140512</div>
<div style="position:absolute;left:943px;top:307px;width:70px;height:18px;line-height:18px;background:#c9dcf9;padding-left:2px;white-space:pre;overflow:hidden;font-size:10.6px;color:#111;">0</div>
<div style="position:absolute;left:1014px;top:307px;width:42px;height:18px;background:#c9dcf9;overflow:hidden;"><div style="position:absolute;right:-18px;top:0;line-height:18px;white-space:nowrap;font-size:10.6px;color:#111;">756 465,00</div></div>
<div style="position:absolute;left:404px;top:325px;width:142px;height:18px;line-height:18px;background:#e1ecfc;padding-left:2px;white-space:pre;overflow:hidden;font-size:10.6px;color:#111;">FP-M-ZAH-2016-300-000005</div>
<div style="position:absolute;left:547px;top:325px;width:131px;height:18px;line-height:18px;background:#e1ecfc;padding-left:2px;white-space:pre;overflow:hidden;font-size:10.6px;color:#111;">02.06.2016</div>
<div style="position:absolute;left:679px;top:325px;width:168px;height:18px;line-height:18px;background:#e1ecfc;padding-left:2px;white-space:pre;overflow:hidden;font-size:10.6px;color:#111;">TOMEN Industries</div>
<div style="position:absolute;left:848px;top:325px;width:94px;height:18px;line-height:18px;background:#e1ecfc;padding-left:2px;white-space:pre;overflow:hidden;font-size:10.6px;color:#111;"></div>
<div style="position:absolute;left:943px;top:325px;width:70px;height:18px;line-height:18px;background:#e1ecfc;padding-left:2px;white-space:pre;overflow:hidden;font-size:10.6px;color:#111;">0</div>
<div style="position:absolute;left:1014px;top:325px;width:42px;height:18px;background:#e1ecfc;overflow:hidden;"><div style="position:absolute;right:-18px;top:0;line-height:18px;white-space:nowrap;font-size:10.6px;color:#111;">61 891,00</div></div>
<div style="position:absolute;left:404px;top:343px;width:142px;height:18px;line-height:18px;background:#c9dcf9;padding-left:2px;white-space:pre;overflow:hidden;font-size:10.6px;color:#111;">FP-MAT-2016-200-000046</div>
<div style="position:absolute;left:547px;top:343px;width:131px;height:18px;line-height:18px;background:#c9dcf9;padding-left:2px;white-space:pre;overflow:hidden;font-size:10.6px;color:#111;">02.06.2016</div>
<div style="position:absolute;left:679px;top:343px;width:168px;height:18px;line-height:18px;background:#c9dcf9;padding-left:2px;white-space:pre;overflow:hidden;font-size:10.6px;color:#111;">Alconn Czech, s.r.o.</div>
<div style="position:absolute;left:848px;top:343px;width:94px;height:18px;line-height:18px;background:#c9dcf9;padding-left:2px;white-space:pre;overflow:hidden;font-size:10.6px;color:#111;">CZ76576457</div>
<div style="position:absolute;left:943px;top:343px;width:70px;height:18px;line-height:18px;background:#c9dcf9;padding-left:2px;white-space:pre;overflow:hidden;font-size:10.6px;color:#111;">21</div>
<div style="position:absolute;left:1014px;top:343px;width:42px;height:18px;background:#c9dcf9;overflow:hidden;"><div style="position:absolute;right:-18px;top:0;line-height:18px;white-space:nowrap;font-size:10.6px;color:#111;">38 728,00</div></div>
<div style="position:absolute;left:404px;top:361px;width:142px;height:18px;line-height:18px;background:#e1ecfc;padding-left:2px;white-space:pre;overflow:hidden;font-size:10.6px;color:#111;">FP-MAT-2016-200-000047</div>
<div style="position:absolute;left:547px;top:361px;width:131px;height:18px;line-height:18px;background:#e1ecfc;padding-left:2px;white-space:pre;overflow:hidden;font-size:10.6px;color:#111;">02.06.2016</div>
<div style="position:absolute;left:679px;top:361px;width:168px;height:18px;line-height:18px;background:#e1ecfc;padding-left:2px;white-space:pre;overflow:hidden;font-size:10.6px;color:#111;">BARVY - LAKY Janák, s.r.o.</div>
<div style="position:absolute;left:848px;top:361px;width:94px;height:18px;line-height:18px;background:#e1ecfc;padding-left:2px;white-space:pre;overflow:hidden;font-size:10.6px;color:#111;">CZ00876654</div>
<div style="position:absolute;left:943px;top:361px;width:70px;height:18px;line-height:18px;background:#e1ecfc;padding-left:2px;white-space:pre;overflow:hidden;font-size:10.6px;color:#111;">21</div>
<div style="position:absolute;left:1014px;top:361px;width:42px;height:18px;background:#e1ecfc;overflow:hidden;"><div style="position:absolute;right:-18px;top:0;line-height:18px;white-space:nowrap;font-size:10.6px;color:#111;">15 000,00</div></div>
<div style="position:absolute;left:404px;top:379px;width:142px;height:18px;line-height:18px;background:#c9dcf9;padding-left:2px;white-space:pre;overflow:hidden;font-size:10.6px;color:#111;">FP-MAT-2016-200-000048</div>
<div style="position:absolute;left:547px;top:379px;width:131px;height:18px;line-height:18px;background:#c9dcf9;padding-left:2px;white-space:pre;overflow:hidden;font-size:10.6px;color:#111;">02.06.2016</div>
<div style="position:absolute;left:679px;top:379px;width:168px;height:18px;line-height:18px;background:#c9dcf9;padding-left:2px;white-space:pre;overflow:hidden;font-size:10.6px;color:#111;">EKOTOOL, a.s.</div>
<div style="position:absolute;left:848px;top:379px;width:94px;height:18px;line-height:18px;background:#c9dcf9;padding-left:2px;white-space:pre;overflow:hidden;font-size:10.6px;color:#111;">CZ07678671</div>
<div style="position:absolute;left:943px;top:379px;width:70px;height:18px;line-height:18px;background:#c9dcf9;padding-left:2px;white-space:pre;overflow:hidden;font-size:10.6px;color:#111;">21</div>
<div style="position:absolute;left:1014px;top:379px;width:42px;height:18px;background:#c9dcf9;overflow:hidden;"><div style="position:absolute;right:-18px;top:0;line-height:18px;white-space:nowrap;font-size:10.6px;color:#111;">21 328,00</div></div>
<div style="position:absolute;left:404px;top:397px;width:142px;height:18px;line-height:18px;background:#e1ecfc;padding-left:2px;white-space:pre;overflow:hidden;font-size:10.6px;color:#111;">FP-MAT-2016-200-000049</div>
<div style="position:absolute;left:547px;top:397px;width:131px;height:18px;line-height:18px;background:#e1ecfc;padding-left:2px;white-space:pre;overflow:hidden;font-size:10.6px;color:#111;">02.06.2016</div>
<div style="position:absolute;left:679px;top:397px;width:168px;height:18px;line-height:18px;background:#e1ecfc;padding-left:2px;white-space:pre;overflow:hidden;font-size:10.6px;color:#111;">PRO-OBAL s.r.o.</div>
<div style="position:absolute;left:848px;top:397px;width:94px;height:18px;line-height:18px;background:#e1ecfc;padding-left:2px;white-space:pre;overflow:hidden;font-size:10.6px;color:#111;">CZ45124377</div>
<div style="position:absolute;left:943px;top:397px;width:70px;height:18px;line-height:18px;background:#e1ecfc;padding-left:2px;white-space:pre;overflow:hidden;font-size:10.6px;color:#111;">21</div>
<div style="position:absolute;left:1014px;top:397px;width:42px;height:18px;background:#e1ecfc;overflow:hidden;"><div style="position:absolute;right:-18px;top:0;line-height:18px;white-space:nowrap;font-size:10.6px;color:#111;">3 162,00</div></div>
<div style="position:absolute;left:404px;top:415px;width:142px;height:18px;line-height:18px;background:#c9dcf9;padding-left:2px;white-space:pre;overflow:hidden;font-size:10.6px;color:#111;">FP-MAT-2016-200-000050</div>
<div style="position:absolute;left:547px;top:415px;width:131px;height:18px;line-height:18px;background:#c9dcf9;padding-left:2px;white-space:pre;overflow:hidden;font-size:10.6px;color:#111;">02.06.2016</div>
<div style="position:absolute;left:679px;top:415px;width:168px;height:18px;line-height:18px;background:#c9dcf9;padding-left:2px;white-space:pre;overflow:hidden;font-size:10.6px;color:#111;">TECHNOPLYN a.s.</div>
<div style="position:absolute;left:848px;top:415px;width:94px;height:18px;line-height:18px;background:#c9dcf9;padding-left:2px;white-space:pre;overflow:hidden;font-size:10.6px;color:#111;">CZ76565435</div>
<div style="position:absolute;left:943px;top:415px;width:70px;height:18px;line-height:18px;background:#c9dcf9;padding-left:2px;white-space:pre;overflow:hidden;font-size:10.6px;color:#111;">21</div>
<div style="position:absolute;left:1014px;top:415px;width:42px;height:18px;background:#c9dcf9;overflow:hidden;"><div style="position:absolute;right:-18px;top:0;line-height:18px;white-space:nowrap;font-size:10.6px;color:#111;">6 000,00</div></div>
<div style="position:absolute;left:404px;top:433px;width:142px;height:18px;line-height:18px;background:#e1ecfc;padding-left:2px;white-space:pre;overflow:hidden;font-size:10.6px;color:#111;">FP-MAT-2016-200-000051</div>
<div style="position:absolute;left:547px;top:433px;width:131px;height:18px;line-height:18px;background:#e1ecfc;padding-left:2px;white-space:pre;overflow:hidden;font-size:10.6px;color:#111;">02.06.2016</div>
<div style="position:absolute;left:679px;top:433px;width:168px;height:18px;line-height:18px;background:#e1ecfc;padding-left:2px;white-space:pre;overflow:hidden;font-size:10.6px;color:#111;">TESKOL, s.r.o.</div>
<div style="position:absolute;left:848px;top:433px;width:94px;height:18px;line-height:18px;background:#e1ecfc;padding-left:2px;white-space:pre;overflow:hidden;font-size:10.6px;color:#111;">CZ91230897</div>
<div style="position:absolute;left:943px;top:433px;width:70px;height:18px;line-height:18px;background:#e1ecfc;padding-left:2px;white-space:pre;overflow:hidden;font-size:10.6px;color:#111;">21</div>
<div style="position:absolute;left:1014px;top:433px;width:42px;height:18px;background:#e1ecfc;overflow:hidden;"><div style="position:absolute;right:-18px;top:0;line-height:18px;white-space:nowrap;font-size:10.6px;color:#111;">72 349,00</div></div>
<div style="position:absolute;left:404px;top:451px;width:142px;height:18px;line-height:18px;background:#c9dcf9;padding-left:2px;white-space:pre;overflow:hidden;font-size:10.6px;color:#111;">FP-MAT-2016-200-000052</div>
<div style="position:absolute;left:547px;top:451px;width:131px;height:18px;line-height:18px;background:#c9dcf9;padding-left:2px;white-space:pre;overflow:hidden;font-size:10.6px;color:#111;">02.06.2016</div>
<div style="position:absolute;left:679px;top:451px;width:168px;height:18px;line-height:18px;background:#c9dcf9;padding-left:2px;white-space:pre;overflow:hidden;font-size:10.6px;color:#111;">Velkoobchod Bikezone, spol. s r.o.</div>
<div style="position:absolute;left:848px;top:451px;width:94px;height:18px;line-height:18px;background:#c9dcf9;padding-left:2px;white-space:pre;overflow:hidden;font-size:10.6px;color:#111;">CZ64634000</div>
<div style="position:absolute;left:943px;top:451px;width:70px;height:18px;line-height:18px;background:#c9dcf9;padding-left:2px;white-space:pre;overflow:hidden;font-size:10.6px;color:#111;">21</div>
<div style="position:absolute;left:1014px;top:451px;width:42px;height:18px;background:#c9dcf9;overflow:hidden;"><div style="position:absolute;right:-18px;top:0;line-height:18px;white-space:nowrap;font-size:10.6px;color:#111;">30 702,00</div></div>
<div style="position:absolute;left:404px;top:469px;width:142px;height:18px;line-height:18px;background:#e1ecfc;padding-left:2px;white-space:pre;overflow:hidden;font-size:10.6px;color:#111;">FP-MAT-2016-200-000053</div>
<div style="position:absolute;left:547px;top:469px;width:131px;height:18px;line-height:18px;background:#e1ecfc;padding-left:2px;white-space:pre;overflow:hidden;font-size:10.6px;color:#111;">30.06.2016</div>
<div style="position:absolute;left:679px;top:469px;width:168px;height:18px;line-height:18px;background:#e1ecfc;padding-left:2px;white-space:pre;overflow:hidden;font-size:10.6px;color:#111;">Velom, spol. s r.o.</div>
<div style="position:absolute;left:848px;top:469px;width:94px;height:18px;line-height:18px;background:#e1ecfc;padding-left:2px;white-space:pre;overflow:hidden;font-size:10.6px;color:#111;">CZ75454560</div>
<div style="position:absolute;left:943px;top:469px;width:70px;height:18px;line-height:18px;background:#e1ecfc;padding-left:2px;white-space:pre;overflow:hidden;font-size:10.6px;color:#111;">21</div>
<div style="position:absolute;left:1014px;top:469px;width:42px;height:18px;background:#e1ecfc;overflow:hidden;"><div style="position:absolute;right:-18px;top:0;line-height:18px;white-space:nowrap;font-size:10.6px;color:#111;">27 585,00</div></div>
<div style="position:absolute;left:404px;top:487px;width:142px;height:18px;line-height:18px;background:#c9dcf9;padding-left:2px;white-space:pre;overflow:hidden;font-size:10.6px;color:#111;">FP-REZ-2016-100-000031</div>
<div style="position:absolute;left:547px;top:487px;width:131px;height:18px;line-height:18px;background:#c9dcf9;padding-left:2px;white-space:pre;overflow:hidden;font-size:10.6px;color:#111;">03.06.2016</div>
<div style="position:absolute;left:679px;top:487px;width:168px;height:18px;line-height:18px;background:#c9dcf9;padding-left:2px;white-space:pre;overflow:hidden;font-size:10.6px;color:#111;">E.ON, s. r. o.</div>
<div style="position:absolute;left:848px;top:487px;width:94px;height:18px;line-height:18px;background:#c9dcf9;padding-left:2px;white-space:pre;overflow:hidden;font-size:10.6px;color:#111;">CZ98756542</div>
<div style="position:absolute;left:943px;top:487px;width:70px;height:18px;line-height:18px;background:#c9dcf9;padding-left:2px;white-space:pre;overflow:hidden;font-size:10.6px;color:#111;">21</div>
<div style="position:absolute;left:1014px;top:487px;width:42px;height:18px;background:#c9dcf9;overflow:hidden;"><div style="position:absolute;right:-18px;top:0;line-height:18px;white-space:nowrap;font-size:10.6px;color:#111;">15 500,00</div></div>
<div style="position:absolute;left:404px;top:505px;width:142px;height:18px;line-height:18px;background:#e1ecfc;padding-left:2px;white-space:pre;overflow:hidden;font-size:10.6px;color:#111;">FP-REZ-2016-100-000032</div>
<div style="position:absolute;left:547px;top:505px;width:131px;height:18px;line-height:18px;background:#e1ecfc;padding-left:2px;white-space:pre;overflow:hidden;font-size:10.6px;color:#111;">11.06.2016</div>
<div style="position:absolute;left:679px;top:505px;width:168px;height:18px;line-height:18px;background:#e1ecfc;padding-left:2px;white-space:pre;overflow:hidden;font-size:10.6px;color:#111;">TELEFONIC centrum, spol. s r.o.</div>
<div style="position:absolute;left:848px;top:505px;width:94px;height:18px;line-height:18px;background:#e1ecfc;padding-left:2px;white-space:pre;overflow:hidden;font-size:10.6px;color:#111;">CZ08975425</div>
<div style="position:absolute;left:943px;top:505px;width:70px;height:18px;line-height:18px;background:#e1ecfc;padding-left:2px;white-space:pre;overflow:hidden;font-size:10.6px;color:#111;">21</div>
<div style="position:absolute;left:1014px;top:505px;width:42px;height:18px;background:#e1ecfc;overflow:hidden;"><div style="position:absolute;right:-18px;top:0;line-height:18px;white-space:nowrap;font-size:10.6px;color:#111;">15 600,00</div></div>
<div style="position:absolute;left:404px;top:523px;width:142px;height:18px;line-height:18px;background:#c9dcf9;padding-left:2px;white-space:pre;overflow:hidden;font-size:10.6px;color:#111;">FP-REZ-2016-100-000033</div>
<div style="position:absolute;left:547px;top:523px;width:131px;height:18px;line-height:18px;background:#c9dcf9;padding-left:2px;white-space:pre;overflow:hidden;font-size:10.6px;color:#111;">11.06.2016</div>
<div style="position:absolute;left:679px;top:523px;width:168px;height:18px;line-height:18px;background:#c9dcf9;padding-left:2px;white-space:pre;overflow:hidden;font-size:10.6px;color:#111;">OFO Security, spol. s r.o.</div>
<div style="position:absolute;left:848px;top:523px;width:94px;height:18px;line-height:18px;background:#c9dcf9;padding-left:2px;white-space:pre;overflow:hidden;font-size:10.6px;color:#111;">CZ56571211</div>
<div style="position:absolute;left:943px;top:523px;width:70px;height:18px;line-height:18px;background:#c9dcf9;padding-left:2px;white-space:pre;overflow:hidden;font-size:10.6px;color:#111;">21</div>
<div style="position:absolute;left:1014px;top:523px;width:42px;height:18px;background:#c9dcf9;overflow:hidden;"><div style="position:absolute;right:-18px;top:0;line-height:18px;white-space:nowrap;font-size:10.6px;color:#111;">20 450,00</div></div>
<div style="position:absolute;left:1056px;top:145px;width:17px;height:409px;background:#f0f5fa;"></div>
<div style="position:absolute;left:1056px;top:145px;width:17px;height:16px;background:#f7fafd;"></div>
<svg style="left:1060px;top:150px;" width="10" height="8"><path d="M1 6 L5 2 L9 6" fill="none" stroke="#111" stroke-width="2"/></svg>
<div style="position:absolute;left:1056px;top:161px;width:17px;height:193px;background:#d6e5f3;"></div>
<div style="position:absolute;left:1056px;top:537px;width:17px;height:17px;background:#f7fafd;"></div>
<svg style="left:1060px;top:543px;" width="10" height="8"><path d="M1 2 L5 6 L9 2" fill="none" stroke="#111" stroke-width="2"/></svg>
<div style="position:absolute;left:404px;top:554px;width:652px;height:17px;background:#f0f5fa;"></div>
<svg style="left:409px;top:558px;" width="8" height="10"><path d="M6 1 L2 5 L6 9" fill="none" stroke="#111" stroke-width="2"/></svg>
<div style="position:absolute;left:421px;top:554px;width:17px;height:17px;background:#d6e5f3;"></div>
<div style="position:absolute;left:1039px;top:554px;width:17px;height:17px;background:#f7fafd;"></div>
<svg style="left:1044px;top:558px;" width="8" height="10"><path d="M2 1 L6 5 L2 9" fill="none" stroke="#111" stroke-width="2"/></svg>
<div style="position:absolute;left:1056px;top:554px;width:17px;height:17px;background:#fff;"></div>
<div style="position:absolute;left:1087px;top:143px;width:128px;height:22px;line-height:22px;padding-top:1px;background:#4d87b9;color:#fff;text-align:center;white-space:nowrap;font-size:10.6px;">Zobrazení dokladu</div>
<div style="position:absolute;left:1087px;top:171px;width:128px;height:22px;line-height:22px;padding-top:1px;background:#4d87b9;color:#fff;text-align:center;white-space:nowrap;font-size:10.6px;">Platby</div>
<div style="position:absolute;left:1087px;top:211px;width:128px;height:22px;line-height:22px;padding-top:1px;background:#4d87b9;color:#fff;text-align:center;white-space:nowrap;font-size:10.6px;">Uzávěrka DPH</div>
<div style="position:absolute;left:1087px;top:239px;width:128px;height:22px;line-height:22px;padding-top:1px;background:#4d87b9;color:#fff;text-align:center;white-space:nowrap;font-size:10.6px;">Kontrola plnění</div>
<div style="position:absolute;left:1087px;top:295px;width:128px;height:22px;line-height:22px;padding-top:1px;background:#4d87b9;color:#fff;text-align:center;white-space:nowrap;font-size:10.6px;">Evidence TRC</div>
<div style="position:absolute;left:1087px;top:323px;width:128px;height:22px;line-height:22px;padding-top:1px;background:#4d87b9;color:#fff;text-align:center;white-space:nowrap;font-size:10.6px;">Účetní rekapitulace</div>
<div style="position:absolute;left:1087px;top:543px;width:128px;height:22px;line-height:22px;padding-top:1px;background:#4d87b9;color:#fff;text-align:center;white-space:nowrap;font-size:10.6px;">Datová schránka</div>
<div style="position:absolute;left:1087px;top:573px;width:128px;height:22px;line-height:22px;padding-top:1px;background:#4d87b9;color:#fff;text-align:center;white-space:nowrap;font-size:10.6px;">Export do XML</div>
<div style="position:absolute;left:1087px;top:601px;width:128px;height:22px;line-height:22px;padding-top:1px;background:#4d87b9;color:#fff;text-align:center;white-space:nowrap;font-size:10.6px;">Tisk</div>
<div style="position:absolute;left:1087px;top:267px;width:128px;height:22px;line-height:22px;padding-top:1px;background:#4d87b9;color:#8fb4d6;text-align:center;white-space:nowrap;font-size:10.6px;">Evidence TRC pův.</div>
<div style="position:absolute;left:401px;top:584px;height:14px;line-height:14px;white-space:nowrap;font-size:10.6px;color:#111;">DPH na výstupu</div>
<div style="position:absolute;left:529px;top:584px;height:14px;line-height:14px;white-space:nowrap;font-size:10.6px;color:#111;">DPH na vstupu</div>
<div style="position:absolute;left:657px;top:584px;height:14px;line-height:14px;white-space:nowrap;font-size:10.6px;color:#111;">Povinnost / Odpočet</div>
<div style="position:absolute;left:785px;top:584px;height:14px;line-height:14px;white-space:nowrap;font-size:10.6px;color:#111;">Účetní měna</div>
<div style="position:absolute;left:403px;top:603px;width:118px;height:19px;line-height:17px;background:#dde9fb;border:1px solid #c6d8f3;text-align:right;padding:0 2px;white-space:nowrap;overflow:hidden;font-size:10.6px;color:#111;">273 244,20</div>
<div style="position:absolute;left:531px;top:603px;width:118px;height:19px;line-height:17px;background:#dde9fb;border:1px solid #c6d8f3;text-align:right;padding:0 2px;white-space:nowrap;overflow:hidden;font-size:10.6px;color:#111;">67 224,95</div>
<div style="position:absolute;left:659px;top:603px;width:118px;height:19px;line-height:17px;background:#dde9fb;border:1px solid #c6d8f3;text-align:right;padding:0 2px;white-space:nowrap;overflow:hidden;font-size:10.6px;color:#111;">206 019,25</div>
<div style="position:absolute;left:787px;top:603px;width:62px;height:19px;line-height:17px;background:#dde9fb;border:1px solid #c6d8f3;text-align:left;padding:0 2px;white-space:nowrap;overflow:hidden;font-size:10.6px;color:#111;">CZK</div>
<div style="position:absolute;left:1230px;top:368px;width:448px;height:241px;background:#fff;"></div>
<div style="position:absolute;left:1230px;top:368px;width:448px;height:27px;background:#e9e9e9;border-bottom:1px solid #d3e2f1;"></div>
<svg style="left:1237px;top:374px;" width="16" height="17"><path d="M1 1 L14.5 8 L1 15.5Z" fill="#fff"/><path d="M3 13.5 L12.5 8.5" stroke="#9a9a9a" stroke-width="1.4"/><path d="M1.5 1 L1.5 4.5 M1.5 1 L3.5 2" stroke="#c0c0c0"/></svg>
<div style="position:absolute;left:1256px;top:369px;height:26px;line-height:26px;white-space:nowrap;font-weight:bold;font-size:11.35px;color:#3c3c3c;">Souhrnné hlášení</div>
<div style="position:absolute;left:1587px;top:369px;height:26px;line-height:26px;white-space:nowrap;font-weight:bold;font-size:11.35px;color:#3c3c3c;">1</div>
<svg style="left:1605px;top:378px;" width="62" height="12"><path d="M0 5.5 H10" stroke="#111" stroke-width="1.3"/><rect x="25" y="0.6" width="9.6" height="9.6" fill="none" stroke="#111" stroke-width="1.3"/><path d="M50 0.5 L60 10.5 M60 0.5 L50 10.5" stroke="#111" stroke-width="2.2"/></svg>
<div style="position:absolute;left:1243px;top:405px;width:286px;height:190px;border:1px solid #c6d8f3;background:#f6f9fe;"></div>
<div style="position:absolute;left:1244px;top:406px;width:284px;height:18px;background:linear-gradient(#fdfeff,#e8eef7);"></div>
<div style="position:absolute;left:1244px;top:406px;width:51px;height:18px;line-height:18px;padding-left:2px;white-space:nowrap;overflow:hidden;font-size:10.6px;color:#152238;">Kód země</div>
<div style="position:absolute;left:1295px;top:406px;width:78px;height:18px;line-height:18px;padding-left:2px;white-space:nowrap;overflow:hidden;font-size:10.6px;color:#152238;">Stát</div>
<div style="position:absolute;left:1294px;top:406px;width:1px;height:18px;background:#dbe6f3"></div>
<div style="position:absolute;left:1373px;top:406px;width:112px;height:18px;line-height:18px;padding-left:2px;white-space:nowrap;overflow:hidden;font-size:10.6px;color:#152238;">DIČ pořizovatele zboží</div>
<div style="position:absolute;left:1372px;top:406px;width:1px;height:18px;background:#dbe6f3"></div>
<div style="position:absolute;left:1485px;top:406px;width:44px;height:18px;line-height:18px;padding-left:2px;white-space:nowrap;overflow:hidden;font-size:10.6px;color:#152238;">Celko...</div>
<div style="position:absolute;left:1484px;top:406px;width:1px;height:18px;background:#dbe6f3"></div>
<div style="position:absolute;left:1244px;top:424px;width:50px;height:18px;line-height:18px;background:#004671;padding-left:2px;white-space:pre;overflow:hidden;font-size:10.6px;color:#fff;">DE</div>
<div style="position:absolute;left:1295px;top:424px;width:77px;height:18px;line-height:18px;background:#004671;padding-left:2px;white-space:pre;overflow:hidden;font-size:10.6px;color:#fff;">GERMANY</div>
<div style="position:absolute;left:1373px;top:424px;width:111px;height:18px;line-height:18px;background:#004671;padding-left:2px;white-space:pre;overflow:hidden;font-size:10.6px;color:#fff;">811140512</div>
<div style="position:absolute;left:1485px;top:424px;width:43px;height:18px;line-height:18px;background:#004671;padding-left:2px;white-space:pre;overflow:hidden;font-size:10.6px;color:#fff;"></div>
<div style="position:absolute;left:1244px;top:577px;width:284px;height:17px;background:#f0f5fa;"></div>
<svg style="left:1249px;top:581px;" width="8" height="10"><path d="M6 1 L2 5 L6 9" fill="none" stroke="#111" stroke-width="2"/></svg>
<div style="position:absolute;left:1261px;top:577px;width:17px;height:17px;background:#d6e5f3;"></div>
<div style="position:absolute;left:1511px;top:577px;width:17px;height:17px;background:#f7fafd;"></div>
<svg style="left:1516px;top:581px;" width="8" height="10"><path d="M2 1 L6 5 L2 9" fill="none" stroke="#111" stroke-width="2"/></svg>
<div style="position:absolute;left:1538px;top:404px;width:128px;height:22px;line-height:22px;padding-top:1px;background:#4d87b9;color:#fff;text-align:center;white-space:nowrap;font-size:10.6px;">Doklady k hlášení</div>
<div style="position:absolute;left:1538px;top:520px;width:128px;height:22px;line-height:22px;padding-top:1px;background:#4d87b9;color:#fff;text-align:center;white-space:nowrap;font-size:10.6px;">Datová schránka</div>
<div style="position:absolute;left:1538px;top:548px;width:128px;height:22px;line-height:22px;padding-top:1px;background:#4d87b9;color:#fff;text-align:center;white-space:nowrap;font-size:10.6px;">Export hlášení</div>
<div style="position:absolute;left:1538px;top:576px;width:128px;height:22px;line-height:22px;padding-top:1px;background:#4d87b9;color:#fff;text-align:center;white-space:nowrap;font-size:10.6px;">Tisk</div>
<div style="position:absolute;left:862px;top:638px;width:788px;height:410px;background:#fff;border-left:1px solid #9fb8d3;"></div>
<div style="position:absolute;left:863px;top:638px;width:787px;height:28px;background:#1d4766;"></div>
<svg style="left:869px;top:644px;" width="16" height="17"><path d="M1 1 L15 8.5 L1 16Z" fill="#fff"/><path d="M3 14 L12 9" stroke="#aaa" stroke-width="1.2"/></svg>
<div style="position:absolute;left:888px;top:639px;height:27px;line-height:27px;white-space:nowrap;font-weight:bold;font-size:11.35px;color:#fff;">Podklady pro Kontrolní hlášení DPH</div>
<div style="position:absolute;left:1552px;top:639px;height:27px;line-height:27px;white-space:nowrap;font-weight:bold;font-size:11.35px;color:#fff;">23</div>
<svg style="left:1577px;top:648px;" width="62" height="12"><path d="M0 5.5 H10" stroke="#fff" stroke-width="1.3"/><rect x="25" y="0.6" width="9.6" height="9.6" fill="none" stroke="#fff" stroke-width="1.3"/><path d="M50 0.5 L60 10.5 M60 0.5 L50 10.5" stroke="#fff" stroke-width="1.1"/></svg>
<div style="position:absolute;left:873px;top:674px;height:14px;line-height:14px;white-space:nowrap;font-size:10.6px;color:#111;">Rok</div>
<div style="position:absolute;left:941px;top:674px;height:14px;line-height:14px;white-space:nowrap;font-size:10.6px;color:#111;">Měsíc</div>
<div style="position:absolute;left:1009px;top:674px;height:14px;line-height:14px;white-space:nowrap;font-size:10.6px;color:#111;">Čtvrtletí</div>
<div style="position:absolute;left:1078px;top:674px;height:14px;line-height:14px;white-space:nowrap;font-size:10.6px;color:#111;">Zdaňovací období</div>
<div style="position:absolute;left:875px;top:692px;width:58px;height:19px;line-height:17px;background:#dde9fb;border:1px solid #c6d8f3;text-align:right;padding:0 2px;white-space:nowrap;overflow:hidden;font-size:11px;color:#111;font-weight:bold;">2016</div>
<div style="position:absolute;left:943px;top:692px;width:58px;height:19px;line-height:17px;background:#dde9fb;border:1px solid #c6d8f3;text-align:left;padding:0 2px;white-space:nowrap;overflow:hidden;font-size:11px;color:#111;font-weight:bold;">06</div>
<div style="position:absolute;left:1011px;top:692px;width:58px;height:19px;line-height:17px;background:#dde9fb;border:1px solid #c6d8f3;text-align:left;padding:0 2px;white-space:nowrap;overflow:hidden;font-size:10.6px;color:#111;"></div>
<div style="position:absolute;left:1079px;top:692px;width:118px;height:19px;line-height:17px;background:#dde9fb;border:1px solid #c6d8f3;text-align:left;padding:0 2px;white-space:nowrap;overflow:hidden;font-size:11px;color:#111;font-weight:bold;">Měsíční</div>
<div style="position:absolute;left:875px;top:727px;width:622px;height:307px;border:1px solid #c6d8f3;background:#f7fafd;"></div>
<div style="position:absolute;left:876px;top:728px;width:603px;height:36px;background:linear-gradient(#fdfeff,#e8eef7);"></div>
<div style="position:absolute;left:876px;top:728px;width:97px;height:36px;padding:3px 3px 0 3px;line-height:13px;white-space:pre;overflow:hidden;font-size:10.6px;color:#152238;">Označení kategorie</div>
<div style="position:absolute;left:972px;top:728px;width:185px;height:36px;padding:3px 3px 0 3px;line-height:13px;white-space:pre;overflow:hidden;font-size:10.6px;color:#152238;">Evidenční číslo pro kontrolní hlášení</div>
<div style="position:absolute;left:972px;top:728px;width:1px;height:36px;background:#dbe6f3"></div>
<div style="position:absolute;left:1157px;top:728px;width:185px;height:36px;padding:3px 3px 0 3px;line-height:13px;white-space:pre;overflow:hidden;font-size:10.6px;color:#152238;">Evidenční číslo dokladu</div>
<div style="position:absolute;left:1157px;top:728px;width:1px;height:36px;background:#dbe6f3"></div>
<div style="position:absolute;left:1342px;top:728px;width:137px;height:36px;padding:3px 3px 0 3px;line-height:13px;white-space:pre;overflow:hidden;font-size:10.6px;color:#152238;">Původní evidenční číslo</div>
<div style="position:absolute;left:1342px;top:728px;width:1px;height:36px;background:#dbe6f3"></div>
<div style="position:absolute;left:876px;top:764px;width:96px;height:18px;line-height:18px;background:#004671;padding-left:2px;white-space:pre;overflow:hidden;font-size:10.6px;color:#fff;">A.4.</div>
<div style="position:absolute;left:973px;top:764px;width:184px;height:18px;line-height:18px;background:#004671;padding-left:2px;white-space:pre;overflow:hidden;font-size:10.6px;color:#fff;">FV-2016-100-000029</div>
<div style="position:absolute;left:1158px;top:764px;width:184px;height:18px;line-height:18px;background:#004671;padding-left:2px;white-space:pre;overflow:hidden;font-size:10.6px;color:#fff;">FV-2016-100-000029</div>
<div style="position:absolute;left:1343px;top:764px;width:136px;height:18px;line-height:18px;background:#004671;padding-left:2px;white-space:pre;overflow:hidden;font-size:10.6px;color:#fff;"></div>
<div style="position:absolute;left:876px;top:782px;width:96px;height:18px;line-height:18px;background:#f6f9fe;padding-left:2px;white-space:pre;overflow:hidden;font-size:10.6px;color:#111;">A.4.</div>
<div style="position:absolute;left:973px;top:782px;width:184px;height:18px;line-height:18px;background:#c9dcf9;padding-left:2px;white-space:pre;overflow:hidden;font-size:10.6px;color:#111;">FV-2016-100-000030</div>
<div style="position:absolute;left:1158px;top:782px;width:184px;height:18px;line-height:18px;background:#c9dcf9;padding-left:2px;white-space:pre;overflow:hidden;font-size:10.6px;color:#111;">FV-2016-100-000030</div>
<div style="position:absolute;left:1343px;top:782px;width:136px;height:18px;line-height:18px;background:#f6f9fe;padding-left:2px;white-space:pre;overflow:hidden;font-size:10.6px;color:#111;"></div>
<div style="position:absolute;left:876px;top:800px;width:96px;height:18px;line-height:18px;background:#ffffff;padding-left:2px;white-space:pre;overflow:hidden;font-size:10.6px;color:#111;">A.4.</div>
<div style="position:absolute;left:973px;top:800px;width:184px;height:18px;line-height:18px;background:#e1ecfc;padding-left:2px;white-space:pre;overflow:hidden;font-size:10.6px;color:#111;">FV-2016-100-000031</div>
<div style="position:absolute;left:1158px;top:800px;width:184px;height:18px;line-height:18px;background:#e1ecfc;padding-left:2px;white-space:pre;overflow:hidden;font-size:10.6px;color:#111;">FV-2016-100-000031</div>
<div style="position:absolute;left:1343px;top:800px;width:136px;height:18px;line-height:18px;background:#ffffff;padding-left:2px;white-space:pre;overflow:hidden;font-size:10.6px;color:#111;"></div>
<div style="position:absolute;left:876px;top:818px;width:96px;height:18px;line-height:18px;background:#f6f9fe;padding-left:2px;white-space:pre;overflow:hidden;font-size:10.6px;color:#111;">A.4.</div>
<div style="position:absolute;left:973px;top:818px;width:184px;height:18px;line-height:18px;background:#c9dcf9;padding-left:2px;white-space:pre;overflow:hidden;font-size:10.6px;color:#111;">6100000032</div>
<div style="position:absolute;left:1158px;top:818px;width:184px;height:18px;line-height:18px;background:#c9dcf9;padding-left:2px;white-space:pre;overflow:hidden;font-size:10.6px;color:#111;">FV-2016-100-000032</div>
<div style="position:absolute;left:1343px;top:818px;width:136px;height:18px;line-height:18px;background:#f6f9fe;padding-left:2px;white-space:pre;overflow:hidden;font-size:10.6px;color:#111;"></div>
<div style="position:absolute;left:876px;top:836px;width:96px;height:18px;line-height:18px;background:#ffffff;padding-left:2px;white-space:pre;overflow:hidden;font-size:10.6px;color:#111;">A.4.</div>
<div style="position:absolute;left:973px;top:836px;width:184px;height:18px;line-height:18px;background:#e1ecfc;padding-left:2px;white-space:pre;overflow:hidden;font-size:10.6px;color:#111;">FV-2016-100-000033</div>
<div style="position:absolute;left:1158px;top:836px;width:184px;height:18px;line-height:18px;background:#e1ecfc;padding-left:2px;white-space:pre;overflow:hidden;font-size:10.6px;color:#111;">FV-2016-100-000033</div>
<div style="position:absolute;left:1343px;top:836px;width:136px;height:18px;line-height:18px;background:#ffffff;padding-left:2px;white-space:pre;overflow:hidden;font-size:10.6px;color:#111;"></div>
<div style="position:absolute;left:876px;top:854px;width:96px;height:18px;line-height:18px;background:#f6f9fe;padding-left:2px;white-space:pre;overflow:hidden;font-size:10.6px;color:#111;">A.5.</div>
<div style="position:absolute;left:973px;top:854px;width:184px;height:18px;line-height:18px;background:#c9dcf9;padding-left:2px;white-space:pre;overflow:hidden;font-size:10.6px;color:#111;">FV-S-2016-120-000001</div>
<div style="position:absolute;left:1158px;top:854px;width:184px;height:18px;line-height:18px;background:#c9dcf9;padding-left:2px;white-space:pre;overflow:hidden;font-size:10.6px;color:#111;">FV-S-2016-120-000001</div>
<div style="position:absolute;left:1343px;top:854px;width:136px;height:18px;line-height:18px;background:#f6f9fe;padding-left:2px;white-space:pre;overflow:hidden;font-size:10.6px;color:#111;"></div>
<div style="position:absolute;left:876px;top:872px;width:96px;height:18px;line-height:18px;background:#ffffff;padding-left:2px;white-space:pre;overflow:hidden;font-size:10.6px;color:#111;">B.2.</div>
<div style="position:absolute;left:973px;top:872px;width:184px;height:18px;line-height:18px;background:#e1ecfc;padding-left:2px;white-space:pre;overflow:hidden;font-size:10.6px;color:#111;">698498490</div>
<div style="position:absolute;left:1158px;top:872px;width:184px;height:18px;line-height:18px;background:#e1ecfc;padding-left:2px;white-space:pre;overflow:hidden;font-size:10.6px;color:#111;">FP-MAT-2016-200-000053</div>
<div style="position:absolute;left:1343px;top:872px;width:136px;height:18px;line-height:18px;background:#ffffff;padding-left:2px;white-space:pre;overflow:hidden;font-size:10.6px;color:#111;">698498490</div>
<div style="position:absolute;left:876px;top:890px;width:96px;height:18px;line-height:18px;background:#f6f9fe;padding-left:2px;white-space:pre;overflow:hidden;font-size:10.6px;color:#111;">B.2.</div>
<div style="position:absolute;left:973px;top:890px;width:184px;height:18px;line-height:18px;background:#c9dcf9;padding-left:2px;white-space:pre;overflow:hidden;font-size:10.6px;color:#111;">5102111652</div>
<div style="position:absolute;left:1158px;top:890px;width:184px;height:18px;line-height:18px;background:#c9dcf9;padding-left:2px;white-space:pre;overflow:hidden;font-size:10.6px;color:#111;">FP-REZ-2016-100-000033</div>
<div style="position:absolute;left:1343px;top:890px;width:136px;height:18px;line-height:18px;background:#f6f9fe;padding-left:2px;white-space:pre;overflow:hidden;font-size:10.6px;color:#111;">5102111652</div>
<div style="position:absolute;left:876px;top:908px;width:96px;height:18px;line-height:18px;background:#ffffff;padding-left:2px;white-space:pre;overflow:hidden;font-size:10.6px;color:#111;">B.2.</div>
<div style="position:absolute;left:973px;top:908px;width:184px;height:18px;line-height:18px;background:#e1ecfc;padding-left:2px;white-space:pre;overflow:hidden;font-size:10.6px;color:#111;">98894004</div>
<div style="position:absolute;left:1158px;top:908px;width:184px;height:18px;line-height:18px;background:#e1ecfc;padding-left:2px;white-space:pre;overflow:hidden;font-size:10.6px;color:#111;">FP-MAT-2016-200-000051</div>
<div style="position:absolute;left:1343px;top:908px;width:136px;height:18px;line-height:18px;background:#ffffff;padding-left:2px;white-space:pre;overflow:hidden;font-size:10.6px;color:#111;">98894004</div>
<div style="position:absolute;left:876px;top:926px;width:96px;height:18px;line-height:18px;background:#f6f9fe;padding-left:2px;white-space:pre;overflow:hidden;font-size:10.6px;color:#111;">B.2.</div>
<div style="position:absolute;left:973px;top:926px;width:184px;height:18px;line-height:18px;background:#c9dcf9;padding-left:2px;white-space:pre;overflow:hidden;font-size:10.6px;color:#111;">658214098</div>
<div style="position:absolute;left:1158px;top:926px;width:184px;height:18px;line-height:18px;background:#c9dcf9;padding-left:2px;white-space:pre;overflow:hidden;font-size:10.6px;color:#111;">FP-MAT-2016-200-000052</div>
<div style="position:absolute;left:1343px;top:926px;width:136px;height:18px;line-height:18px;background:#f6f9fe;padding-left:2px;white-space:pre;overflow:hidden;font-size:10.6px;color:#111;">658214098</div>
<div style="position:absolute;left:876px;top:944px;width:96px;height:18px;line-height:18px;background:#ffffff;padding-left:2px;white-space:pre;overflow:hidden;font-size:10.6px;color:#111;">B.2.</div>
<div style="position:absolute;left:973px;top:944px;width:184px;height:18px;line-height:18px;background:#e1ecfc;padding-left:2px;white-space:pre;overflow:hidden;font-size:10.6px;color:#111;">98451321</div>
<div style="position:absolute;left:1158px;top:944px;width:184px;height:18px;line-height:18px;background:#e1ecfc;padding-left:2px;white-space:pre;overflow:hidden;font-size:10.6px;color:#111;">OZ-DOD-2016-600-000011</div>
<div style="position:absolute;left:1343px;top:944px;width:136px;height:18px;line-height:18px;background:#ffffff;padding-left:2px;white-space:pre;overflow:hidden;font-size:10.6px;color:#111;">98451321</div>
<div style="position:absolute;left:876px;top:962px;width:96px;height:18px;line-height:18px;background:#f6f9fe;padding-left:2px;white-space:pre;overflow:hidden;font-size:10.6px;color:#111;">B.2.</div>
<div style="position:absolute;left:973px;top:962px;width:184px;height:18px;line-height:18px;background:#c9dcf9;padding-left:2px;white-space:pre;overflow:hidden;font-size:10.6px;color:#111;">984191</div>
<div style="position:absolute;left:1158px;top:962px;width:184px;height:18px;line-height:18px;background:#c9dcf9;padding-left:2px;white-space:pre;overflow:hidden;font-size:10.6px;color:#111;">OZ-DOD-2016-600-000012</div>
<div style="position:absolute;left:1343px;top:962px;width:136px;height:18px;line-height:18px;background:#f6f9fe;padding-left:2px;white-space:pre;overflow:hidden;font-size:10.6px;color:#111;">984191</div>
<div style="position:absolute;left:876px;top:980px;width:96px;height:18px;line-height:18px;background:#ffffff;padding-left:2px;white-space:pre;overflow:hidden;font-size:10.6px;color:#111;">B.2.</div>
<div style="position:absolute;left:973px;top:980px;width:184px;height:18px;line-height:18px;background:#e1ecfc;padding-left:2px;white-space:pre;overflow:hidden;font-size:10.6px;color:#111;">63632521</div>
<div style="position:absolute;left:1158px;top:980px;width:184px;height:18px;line-height:18px;background:#e1ecfc;padding-left:2px;white-space:pre;overflow:hidden;font-size:10.6px;color:#111;">FP-REZ-2016-100-000031</div>
<div style="position:absolute;left:1343px;top:980px;width:136px;height:18px;line-height:18px;background:#ffffff;padding-left:2px;white-space:pre;overflow:hidden;font-size:10.6px;color:#111;">63632521</div>
<div style="position:absolute;left:876px;top:998px;width:96px;height:18px;line-height:18px;background:#f6f9fe;padding-left:2px;white-space:pre;overflow:hidden;font-size:10.6px;color:#111;">B.2.</div>
<div style="position:absolute;left:973px;top:998px;width:184px;height:18px;line-height:18px;background:#c9dcf9;padding-left:2px;white-space:pre;overflow:hidden;font-size:10.6px;color:#111;">6587423</div>
<div style="position:absolute;left:1158px;top:998px;width:184px;height:18px;line-height:18px;background:#c9dcf9;padding-left:2px;white-space:pre;overflow:hidden;font-size:10.6px;color:#111;">FP-REZ-2016-100-000032</div>
<div style="position:absolute;left:1343px;top:998px;width:136px;height:18px;line-height:18px;background:#f6f9fe;padding-left:2px;white-space:pre;overflow:hidden;font-size:10.6px;color:#111;">6587423</div>
<div style="position:absolute;left:1479px;top:728px;width:17px;height:289px;background:#f0f5fa;"></div>
<div style="position:absolute;left:1479px;top:728px;width:17px;height:36px;background:#f7fafd;"></div>
<svg style="left:1483px;top:733px;" width="10" height="8"><path d="M1 6 L5 2 L9 6" fill="none" stroke="#111" stroke-width="2"/></svg>
<div style="position:absolute;left:1479px;top:764px;width:17px;height:110px;background:#d6e5f3;"></div>
<div style="position:absolute;left:1479px;top:999px;width:17px;height:17px;background:#f7fafd;"></div>
<svg style="left:1483px;top:1005px;" width="10" height="8"><path d="M1 2 L5 6 L9 2" fill="none" stroke="#111" stroke-width="2"/></svg>
<div style="position:absolute;left:876px;top:1016px;width:603px;height:17px;background:#f0f5fa;"></div>
<svg style="left:881px;top:1020px;" width="8" height="10"><path d="M6 1 L2 5 L6 9" fill="none" stroke="#111" stroke-width="2"/></svg>
<div style="position:absolute;left:893px;top:1016px;width:17px;height:17px;background:#d6e5f3;"></div>
<div style="position:absolute;left:1462px;top:1016px;width:17px;height:17px;background:#f7fafd;"></div>
<svg style="left:1467px;top:1020px;" width="8" height="10"><path d="M2 1 L6 5 L2 9" fill="none" stroke="#111" stroke-width="2"/></svg>
<div style="position:absolute;left:1510px;top:726px;width:128px;height:22px;line-height:22px;padding-top:1px;background:#004a80;color:#fff;text-align:center;white-space:nowrap;font-size:10.6px;">Zobrazení dokladu</div>
<div style="position:absolute;left:1510px;top:762px;width:128px;height:22px;line-height:22px;padding-top:1px;background:#4d87b9;color:#fff;text-align:center;white-space:nowrap;font-size:10.6px;">Doplnění kateg.</div>
<div style="position:absolute;left:1510px;top:790px;width:128px;height:22px;line-height:22px;padding-top:1px;background:#4d87b9;color:#fff;text-align:center;white-space:nowrap;font-size:10.6px;">Vymazání kateg.</div>
<div style="position:absolute;left:1510px;top:818px;width:128px;height:22px;line-height:22px;padding-top:1px;background:#4d87b9;color:#fff;text-align:center;white-space:nowrap;font-size:10.6px;">Kontrola záznamů</div>
<div style="position:absolute;left:0px;top:1048px;width:1680px;height:2px;background:#1c1f22;"></div>
</body></html>
